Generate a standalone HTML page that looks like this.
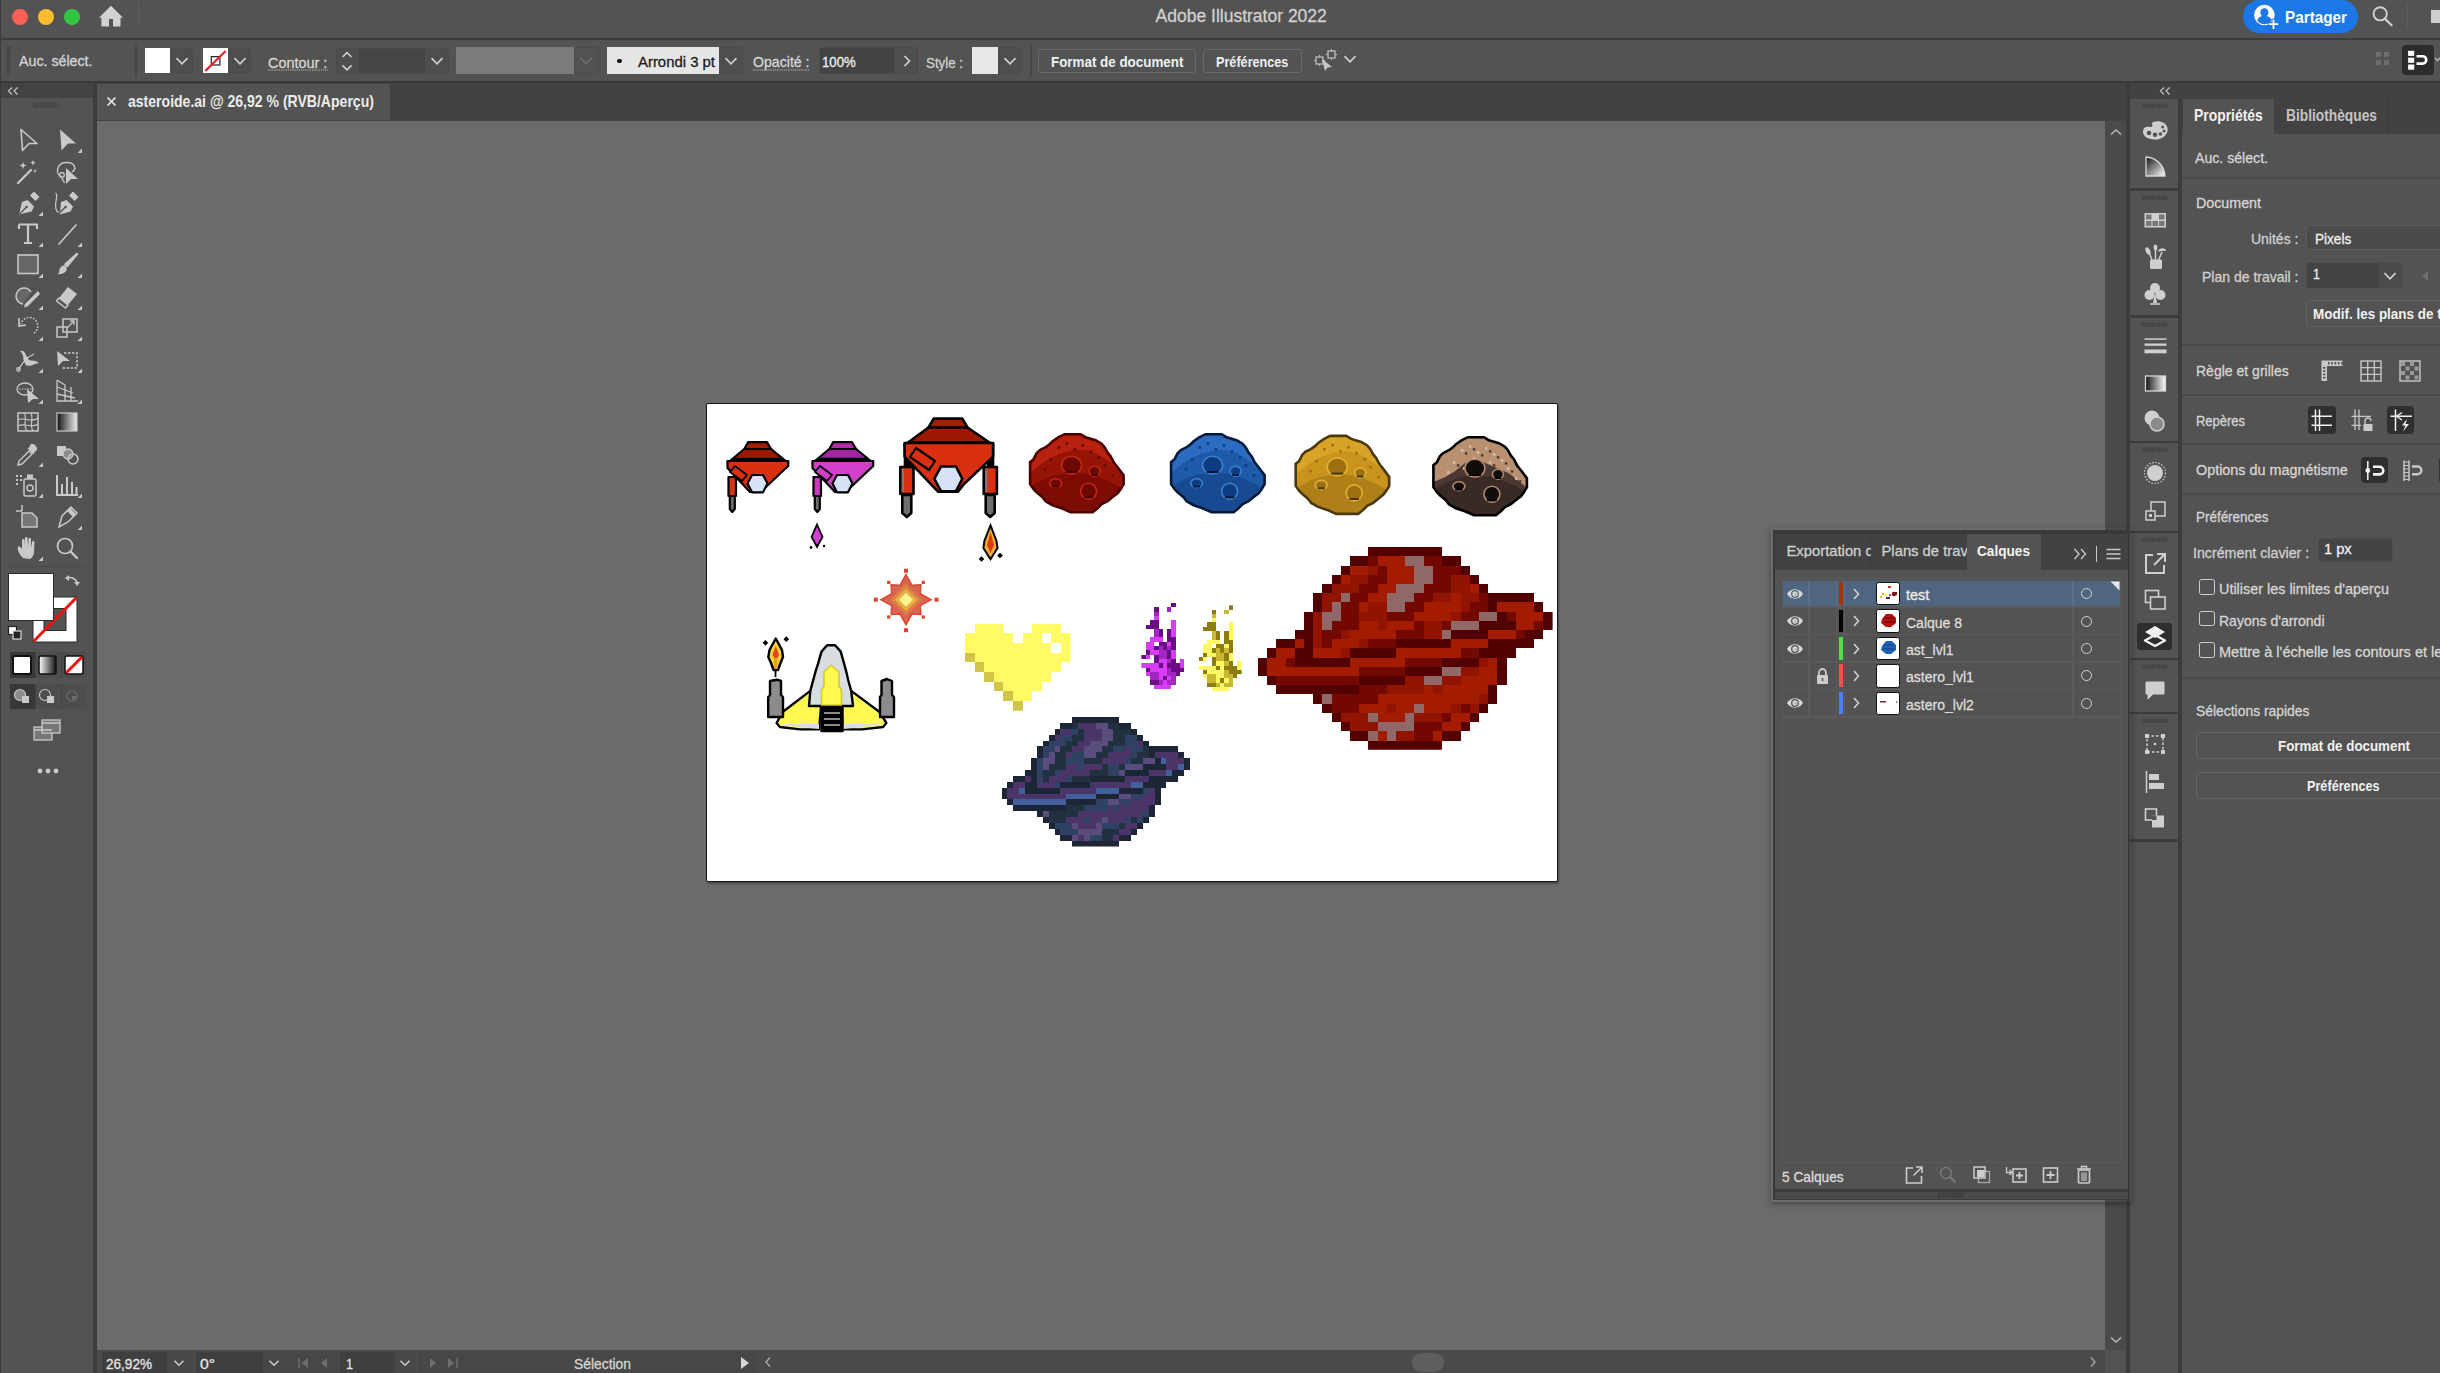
<!DOCTYPE html>
<html><head><meta charset="utf-8">
<style>
*{margin:0;padding:0;box-sizing:border-box}
html,body{width:2440px;height:1373px;overflow:hidden;background:#535353}
body{position:relative;font-family:"Liberation Sans",sans-serif;color:#d8d8d8}
.a{position:absolute;display:block}
.t{position:absolute;white-space:nowrap;line-height:1;transform-origin:0 0}
</style></head><body>
<div class="a" style="left:0px;top:0px;width:2440px;height:38px;background:#535353;"></div>
<div class="a" style="left:0px;top:38px;width:2440px;height:1.5px;background:#3b3b3b;"></div>
<div class="a" style="left:0px;top:39.5px;width:2440px;height:42px;background:#535353;"></div>
<div class="a" style="left:0px;top:81px;width:2440px;height:2px;background:#393939;"></div>
<div class="a" style="left:0px;top:83px;width:2127px;height:38px;background:#424242;"></div>
<div class="a" style="left:0px;top:83px;width:93px;height:15px;background:#434343;"></div>
<div class="a" style="left:0px;top:98px;width:93px;height:1275px;background:#535353;"></div>
<div class="a" style="left:93px;top:83px;width:4px;height:1290px;background:#3c3c3c;"></div>
<div class="a" style="left:97px;top:84px;width:293px;height:36px;background:#535353;"></div>
<div class="a" style="left:97px;top:121px;width:2008px;height:1229px;background:#6b6b6b;"></div>
<div class="a" style="left:2105px;top:121px;width:21px;height:1229px;background:#4a4a4a;"></div>
<div class="a" style="left:97px;top:1350px;width:2008px;height:23px;background:#4a4a4a;"></div>
<div class="a" style="left:2105px;top:1350px;width:21px;height:23px;background:#535353;"></div>
<div class="a" style="left:2126px;top:83px;width:4px;height:1290px;background:#3c3c3c;"></div>
<div class="a" style="left:2130px;top:83px;width:310px;height:16px;background:#424242;"></div>
<div class="a" style="left:2130px;top:99px;width:48px;height:1274px;background:#535353;"></div>
<div class="a" style="left:2178px;top:99px;width:4px;height:1274px;background:#3c3c3c;"></div>
<div class="a" style="left:2182px;top:99px;width:258px;height:1274px;background:#535353;"></div>
<div class="a" style="left:0px;top:0px;width:1px;height:1373px;background:#3a3a3a;"></div>
<div class="a" style="left:11.5px;top:9px;width:16px;height:16px;border-radius:50%;background:#fe5f57"></div>
<div class="a" style="left:37.8px;top:9px;width:16px;height:16px;border-radius:50%;background:#febc2e"></div>
<div class="a" style="left:63.9px;top:9px;width:16px;height:16px;border-radius:50%;background:#30c643"></div>
<svg class="a" style="left:98px;top:4px;" width="26" height="24" viewBox="0 0 26 24"><path d="M13 1.8 L25 13.8 L22.5 13.8 L22.5 22.4 L15 22.4 L15 15 L11 15 L11 22.4 L3.4 22.4 L3.4 13.8 L1 13.8 Z" fill="#d2d2d2"/></svg>
<div class="a" style="left:138px;top:3px;width:1px;height:25px;background:#5f5f5f;"></div>
<div class="t" style="left:1155.6px;top:7.9px;font-size:17.5px;-webkit-text-stroke:0.3px currentColor;color:#d0d0d0;">Adobe Illustrator 2022</div>
<div class="a" style="left:2242.5px;top:0px;width:115.5px;height:32.7px;border-radius:16.4px;background:#1b78e6"></div>
<svg class="a" style="left:2252px;top:3px;" width="30" height="28" viewBox="0 0 30 28"><circle cx="12.4" cy="12" r="10.3" fill="#fff"/><path d="M12.4 5.2c-2.6 0-4 1.9-4 4.2 0 1.6.7 2.9 1.8 3.6-3 .8-4.6 2.6-5 4.6a9 9 0 0 0 14.4 0c-.4-2-2-3.8-5-4.6 1.1-.7 1.8-2 1.8-3.6 0-2.3-1.4-4.2-4-4.2z" fill="#1b78e6"/><path d="M21.5 15.5v11M16 21h11" stroke="#1b78e6" stroke-width="4"/><path d="M21.5 16.5v9.5M16.8 21.2h9.5" stroke="#fff" stroke-width="1.8"/></svg>
<div class="t" style="left:2285.0px;top:8.9px;font-size:16.5px;font-weight:bold;color:#ffffff;transform:scaleX(0.9261);">Partager</div>
<svg class="a" style="left:2370px;top:5px;" width="26" height="24" viewBox="0 0 26 24"><circle cx="10.2" cy="8.8" r="6.6" fill="none" stroke="#d0d0d0" stroke-width="1.9"/><path d="M14.8 13.6 L21.6 20.2" stroke="#d0d0d0" stroke-width="2.2" stroke-linecap="round"/></svg>
<div class="a" style="left:2406.5px;top:2.6px;width:1px;height:25px;background:#5f5f5f;"></div>
<div class="a" style="left:2430.5px;top:9.5px;width:10px;height:13.7px;background:#cfcfcf;"></div>
<svg class="a" style="left:6px;top:47px;" width="5" height="28" viewBox="0 0 5 28"><rect x="0.6" y="0.0" width="3.6" height="1.3" fill="#3d3d3d"/><rect x="0.6" y="2.6" width="3.6" height="1.3" fill="#3d3d3d"/><rect x="0.6" y="5.2" width="3.6" height="1.3" fill="#3d3d3d"/><rect x="0.6" y="7.8" width="3.6" height="1.3" fill="#3d3d3d"/><rect x="0.6" y="10.4" width="3.6" height="1.3" fill="#3d3d3d"/><rect x="0.6" y="13.0" width="3.6" height="1.3" fill="#3d3d3d"/><rect x="0.6" y="15.6" width="3.6" height="1.3" fill="#3d3d3d"/><rect x="0.6" y="18.2" width="3.6" height="1.3" fill="#3d3d3d"/><rect x="0.6" y="20.8" width="3.6" height="1.3" fill="#3d3d3d"/><rect x="0.6" y="23.4" width="3.6" height="1.3" fill="#3d3d3d"/><rect x="0.6" y="26.0" width="3.6" height="1.3" fill="#3d3d3d"/></svg>
<div class="t" style="left:18.9px;top:53.2px;font-size:15.1px;-webkit-text-stroke:0.3px currentColor;color:#d6d6d6;transform:scaleX(0.9421);">Auc. sélect.</div>
<div class="a" style="left:135.2px;top:45px;width:1.5px;height:32px;background:#464646;"></div>
<div class="a" style="left:144.8px;top:48px;width:48.4px;height:25px;background:#4e4e4e;border:1px solid #4a4a4a;border-radius:3px"></div>
<div class="a" style="left:144.8px;top:48px;width:25.2px;height:25px;background:#ffffff;"></div>
<svg class="a" style="left:174px;top:54.7px;" width="16" height="12" viewBox="0 0 16 12"><path d="M2.5 3.2 L8 8.8 L13.5 3.2" fill="none" stroke="#d0d0d0" stroke-width="1.7"/></svg>
<div class="a" style="left:202.7px;top:48px;width:48.1px;height:25px;background:#4e4e4e;border:1px solid #4a4a4a;border-radius:3px"></div>
<div class="a" style="left:202.7px;top:48px;width:25.1px;height:25px;background:#ffffff;"></div>
<svg class="a" style="left:202.7px;top:48px;" width="25" height="25" viewBox="0 0 25 25"><rect x="8.3" y="8.6" width="8.6" height="8.4" fill="none" stroke="#222" stroke-width="1.2"/><path d="M2.3 23 L22.6 3" stroke="#ee1c1c" stroke-width="2.2"/></svg>
<svg class="a" style="left:231.8px;top:54.7px;" width="16" height="12" viewBox="0 0 16 12"><path d="M2.5 3.2 L8 8.8 L13.5 3.2" fill="none" stroke="#d0d0d0" stroke-width="1.7"/></svg>
<div class="t" style="left:267.7px;top:54.5px;font-size:15.1px;-webkit-text-stroke:0.3px currentColor;color:#d6d6d6;transform:scaleX(0.9551);">Contour :</div>
<svg class="a" style="left:267.7px;top:69px;" width="60" height="2" viewBox="0 0 60 2"><path d="M0 1 H60" stroke="#bdbdbd" stroke-width="1" stroke-dasharray="1.2 1"/></svg>
<div class="a" style="left:335.6px;top:48px;width:113.1px;height:25.5px;background:#4e4e4e;border:1px solid #4a4a4a;border-radius:3px"></div>
<div class="a" style="left:359px;top:49px;width:66px;height:23.5px;background:#454545;"></div>
<svg class="a" style="left:340px;top:48px;" width="14" height="26" viewBox="0 0 14 26"><path d="M2.5 9 L7 4.6 L11.5 9 M2.5 17.4 L7 21.8 L11.5 17.4" fill="none" stroke="#d0d0d0" stroke-width="1.6"/></svg>
<svg class="a" style="left:429px;top:54.7px;" width="16" height="12" viewBox="0 0 16 12"><path d="M2.5 3.2 L8 8.8 L13.5 3.2" fill="none" stroke="#d0d0d0" stroke-width="1.7"/></svg>
<div class="a" style="left:456px;top:47.4px;width:118px;height:27px;background:#7b7b7b;"></div>
<div class="a" style="left:574px;top:47.4px;width:24.6px;height:27px;background:#535353;border:1px solid #4a4a4a;border-radius:3px"></div>
<svg class="a" style="left:578px;top:54.7px;" width="16" height="12" viewBox="0 0 16 12"><path d="M2.5 3.2 L8 8.8 L13.5 3.2" fill="none" stroke="#6d6d6d" stroke-width="1.7"/></svg>
<div class="a" style="left:606.5px;top:47.4px;width:136.5px;height:27px;background:#4e4e4e;border:1px solid #4a4a4a;border-radius:3px"></div>
<div class="a" style="left:606.5px;top:47.4px;width:112.5px;height:27px;background:#e6e6e6;"></div>
<div class="a" style="left:617px;top:58.5px;width:4.5px;height:4.5px;border-radius:50%;background:#111"></div>
<div class="t" style="left:638.0px;top:53.5px;font-size:15.1px;-webkit-text-stroke:0.3px currentColor;color:#1b1b1b;transform:scaleX(0.9868);">Arrondi 3 pt</div>
<svg class="a" style="left:723px;top:54.7px;" width="16" height="12" viewBox="0 0 16 12"><path d="M2.5 3.2 L8 8.8 L13.5 3.2" fill="none" stroke="#d0d0d0" stroke-width="1.7"/></svg>
<div class="t" style="left:752.8px;top:53.5px;font-size:15.1px;-webkit-text-stroke:0.3px currentColor;color:#d6d6d6;transform:scaleX(0.9354);">Opacité :</div>
<svg class="a" style="left:752.8px;top:68.5px;" width="57" height="2" viewBox="0 0 57 2"><path d="M0 1 H57" stroke="#bdbdbd" stroke-width="1" stroke-dasharray="1.2 1"/></svg>
<div class="a" style="left:818.7px;top:47.4px;width:99.5px;height:27px;background:#4e4e4e;border:1px solid #4a4a4a;border-radius:3px"></div>
<div class="a" style="left:819.7px;top:48.4px;width:74.7px;height:25px;background:#434343;"></div>
<div class="t" style="left:822.3px;top:53.5px;font-size:15.1px;-webkit-text-stroke:0.3px currentColor;color:#f0f0f0;transform:scaleX(0.8730);">100%</div>
<svg class="a" style="left:900px;top:53px;" width="14" height="16" viewBox="0 0 14 16"><path d="M4.5 3 L9.5 8 L4.5 13" fill="none" stroke="#d0d0d0" stroke-width="1.7"/></svg>
<div class="t" style="left:925.6px;top:54.5px;font-size:15.1px;-webkit-text-stroke:0.3px currentColor;color:#cfcfcf;transform:scaleX(0.8822);">Style :</div>
<div class="a" style="left:972.3px;top:47.4px;width:49.2px;height:27px;background:#4e4e4e;border:1px solid #4a4a4a;border-radius:3px"></div>
<div class="a" style="left:972.3px;top:47.4px;width:25.4px;height:27px;background:#e8e8e8;"></div>
<svg class="a" style="left:1001.6px;top:54.7px;" width="16" height="12" viewBox="0 0 16 12"><path d="M2.5 3.2 L8 8.8 L13.5 3.2" fill="none" stroke="#d0d0d0" stroke-width="1.7"/></svg>
<div class="a" style="left:1030px;top:45px;width:1.5px;height:32px;background:#464646;"></div>
<div class="a" style="left:1038.4px;top:48.6px;width:157.9px;height:24.1px;border:1.2px solid #6a6a6a;border-radius:3px"></div>
<div class="t" style="left:1051.0px;top:54.1px;font-size:15.5px;font-weight:bold;color:#f0f0f0;transform:scaleX(0.8637);">Format de document</div>
<div class="a" style="left:1203px;top:48.6px;width:99px;height:24.1px;border:1.2px solid #6a6a6a;border-radius:3px"></div>
<div class="t" style="left:1216.0px;top:54.1px;font-size:15.5px;font-weight:bold;color:#f0f0f0;transform:scaleX(0.8157);">Préférences</div>
<svg class="a" style="left:1313px;top:48px;" width="26" height="24" viewBox="0 0 26 24"><rect x="3" y="9" width="7" height="7" fill="none" stroke="#bdbdbd" stroke-width="1.3"/><rect x="15" y="3" width="7" height="7" fill="none" stroke="#bdbdbd" stroke-width="1.3"/><path d="M1 12.5h2M10 12.5h2M6.5 7v2M6.5 16v2M13 6.5h2M22 6.5h2M18.5 1v2M18.5 10v2" stroke="#bdbdbd" stroke-width="1"/><path d="M9 11 L19 19 L14.5 19.5 L12 23 Z" fill="#c8c8c8"/></svg>
<svg class="a" style="left:1341.6px;top:53.2px;" width="16" height="12" viewBox="0 0 16 12"><path d="M2.5 3.2 L8 8.8 L13.5 3.2" fill="none" stroke="#d0d0d0" stroke-width="1.7"/></svg>
<svg class="a" style="left:2374px;top:50px;" width="20" height="20" viewBox="0 0 20 20"><rect x="2" y="2" width="5" height="5" fill="#6d6d6d"/><rect x="10" y="2" width="5" height="5" fill="#6d6d6d"/><rect x="2" y="10" width="5" height="5" fill="#6d6d6d"/><rect x="10" y="10" width="5" height="5" fill="#6d6d6d"/></svg>
<div class="a" style="left:2402px;top:45px;width:31.5px;height:30px;border-radius:4px;background:#2c2c2c"></div>
<svg class="a" style="left:2402px;top:45px;" width="32" height="30" viewBox="0 0 32 30"><rect x="6.1" y="5.8" width="6.1" height="5.1" fill="#fff"/><rect x="6.1" y="12.7" width="6.1" height="5.1" fill="#fff"/><rect x="6.1" y="19.5" width="6.1" height="5.2" fill="#fff"/><path d="M14.5 11.2 H20.5 A3.7 3.7 0 0 1 20.5 18.6 H14.5" fill="none" stroke="#fff" stroke-width="2.6"/></svg>
<svg class="a" style="left:2434px;top:54px;" width="6" height="12" viewBox="0 0 6 12"><path d="M1 4 L3.5 6.5 L6 4" fill="none" stroke="#bbb" stroke-width="1.3"/></svg>
<svg class="a" style="left:6px;top:85px;" width="16" height="12" viewBox="0 0 16 12"><path d="M6 2.5 L2.5 6 L6 9.5 M11.5 2.5 L8 6 L11.5 9.5" fill="none" stroke="#bdbdbd" stroke-width="1.4"/></svg>
<svg class="a" style="left:2158px;top:85px;" width="16" height="12" viewBox="0 0 16 12"><path d="M6 2.5 L2.5 6 L6 9.5 M11.5 2.5 L8 6 L11.5 9.5" fill="none" stroke="#bdbdbd" stroke-width="1.4"/></svg>
<svg class="a" style="left:105px;top:95px;" width="13" height="13" viewBox="0 0 13 13"><path d="M2.5 2.5 L10.5 10.5 M10.5 2.5 L2.5 10.5" stroke="#e8e8e8" stroke-width="1.7"/></svg>
<div class="t" style="left:127.9px;top:93.8px;font-size:15.7px;font-weight:bold;color:#ececec;transform:scaleX(0.8948);">asteroide.ai @ 26,92 % (RVB/Aperçu)</div>
<svg class="a" style="left:33px;top:102px;" width="27" height="6" viewBox="0 0 27 6"><rect x="0.0" y="0.5" width="1.3" height="5" fill="#3f3f3f"/><rect x="2.4" y="0.5" width="1.3" height="5" fill="#3f3f3f"/><rect x="4.8" y="0.5" width="1.3" height="5" fill="#3f3f3f"/><rect x="7.2" y="0.5" width="1.3" height="5" fill="#3f3f3f"/><rect x="9.6" y="0.5" width="1.3" height="5" fill="#3f3f3f"/><rect x="12.0" y="0.5" width="1.3" height="5" fill="#3f3f3f"/><rect x="14.4" y="0.5" width="1.3" height="5" fill="#3f3f3f"/><rect x="16.8" y="0.5" width="1.3" height="5" fill="#3f3f3f"/><rect x="19.2" y="0.5" width="1.3" height="5" fill="#3f3f3f"/><rect x="21.6" y="0.5" width="1.3" height="5" fill="#3f3f3f"/><rect x="24.0" y="0.5" width="1.3" height="5" fill="#3f3f3f"/></svg>
<svg class="a" style="left:13.5px;top:126.4px;" width="28" height="28" viewBox="0 0 28 28"><path d="M7 3.5 L23 17.5 L15 17.5 L8.5 24.5 Z" fill="none" stroke="#c9c9c9" stroke-width="1.6" stroke-linejoin="round"/></svg>
<svg class="a" style="left:52.5px;top:126.4px;" width="28" height="28" viewBox="0 0 28 28"><path d="M7 3.5 L23 17.5 L15 17.5 L8.5 24.5 Z" fill="#c9c9c9"/></svg>
<svg class="a" style="left:76.5px;top:148.4px;" width="7" height="7" viewBox="0 0 7 7"><path d="M5 0.5 V5 H0.5 Z" fill="#c9c9c9"/></svg>
<svg class="a" style="left:13.5px;top:158px;" width="28" height="28" viewBox="0 0 28 28"><path d="M4 25 L17 12" stroke="#c9c9c9" stroke-width="2.3" stroke-linecap="round"/><path d="M9 4 l1 2.6 2.6 1 -2.6 1 -1 2.6 -1 -2.6 -2.6 -1 2.6 -1z M19 2 l.8 2 2 .8 -2 .8 -.8 2 -.8 -2 -2 -.8 2 -.8z M21 11 l.6 1.4 1.4.6 -1.4.6 -.6 1.4 -.6 -1.4 -1.4 -.6 1.4 -.6z" fill="#c9c9c9"/></svg>
<svg class="a" style="left:52.5px;top:158px;" width="28" height="28" viewBox="0 0 28 28"><path d="M9 19 C2 17 3 5 13 4.5 C22 4 24 11 19 14" fill="none" stroke="#c9c9c9" stroke-width="1.4"/><circle cx="9" cy="17" r="2.3" fill="none" stroke="#c9c9c9" stroke-width="1.3"/><path d="M9 19.5 C9 23 12 22 11 25" fill="none" stroke="#c9c9c9" stroke-width="1.3"/><path d="M13 10 L25 21 L18 21 L13 26 Z" fill="#c9c9c9"/></svg>
<svg class="a" style="left:13.5px;top:189px;" width="28" height="28" viewBox="0 0 28 28"><path d="M13.5 11 L20 17.5 L17.5 22.5 L5 25.5 L8 13 Z" fill="#c9c9c9"/><path d="M5.5 25 L12 18.5" stroke="#535353" stroke-width="1.2"/><circle cx="12.5" cy="18" r="1.3" fill="#535353"/><path d="M16 6.5 L20 2.5 L25.5 8 L21.5 12 Z" fill="#c9c9c9"/></svg>
<svg class="a" style="left:37.5px;top:211px;" width="7" height="7" viewBox="0 0 7 7"><path d="M5 0.5 V5 H0.5 Z" fill="#c9c9c9"/></svg>
<svg class="a" style="left:52.5px;top:189px;" width="28" height="28" viewBox="0 0 28 28"><path d="M2.5 4 C6 6 1 14 3 20 C4 24 7 24 8 22" fill="none" stroke="#c9c9c9" stroke-width="1.2"/><path d="M13.5 11 L20 17.5 L17.5 22.5 L7 25.5 L8 13 Z" fill="#c9c9c9"/><path d="M5.5 25 L12 18.5" stroke="#535353" stroke-width="1.2"/><circle cx="12.5" cy="18" r="1.3" fill="#535353"/><path d="M16 6.5 L20 2.5 L25.5 8 L21.5 12 Z" fill="#c9c9c9"/></svg>
<svg class="a" style="left:13.5px;top:220px;" width="28" height="28" viewBox="0 0 28 28"><path d="M5 4.5 H23 V9 M5 4.5 V9 M14 4.5 V23 M10 23 H18" fill="none" stroke="#c9c9c9" stroke-width="2.2"/></svg>
<svg class="a" style="left:37.5px;top:242px;" width="7" height="7" viewBox="0 0 7 7"><path d="M5 0.5 V5 H0.5 Z" fill="#c9c9c9"/></svg>
<svg class="a" style="left:52.5px;top:220px;" width="28" height="28" viewBox="0 0 28 28"><path d="M6 24 L23 5" stroke="#c9c9c9" stroke-width="1.7" stroke-linecap="round"/></svg>
<svg class="a" style="left:76.5px;top:242px;" width="7" height="7" viewBox="0 0 7 7"><path d="M5 0.5 V5 H0.5 Z" fill="#c9c9c9"/></svg>
<svg class="a" style="left:13.5px;top:251px;" width="28" height="28" viewBox="0 0 28 28"><rect x="4" y="4" width="20" height="18.5" fill="#686868" stroke="#c9c9c9" stroke-width="1.6"/></svg>
<svg class="a" style="left:37.5px;top:273px;" width="7" height="7" viewBox="0 0 7 7"><path d="M5 0.5 V5 H0.5 Z" fill="#c9c9c9"/></svg>
<svg class="a" style="left:52.5px;top:251px;" width="28" height="28" viewBox="0 0 28 28"><path d="M24 3 L14 15 L12.5 13.5 Z" fill="#c9c9c9" stroke="#c9c9c9" stroke-width="2.5" stroke-linejoin="round"/><path d="M11.5 14.5 C8 14 6 18 6 22 L4.5 23 C9 24 15 21 13.5 16.5 Z" fill="#c9c9c9"/></svg>
<svg class="a" style="left:76.5px;top:273px;" width="7" height="7" viewBox="0 0 7 7"><path d="M5 0.5 V5 H0.5 Z" fill="#c9c9c9"/></svg>
<svg class="a" style="left:13.5px;top:282.5px;" width="28" height="28" viewBox="0 0 28 28"><path d="M9 21 A8 8 0 1 1 17 9" fill="#686868" stroke="#c9c9c9" stroke-width="1.5"/><path d="M24 8 L11 21 L10 24.5 L13.5 23.5 L26 11 Z" fill="#c9c9c9"/></svg>
<svg class="a" style="left:37.5px;top:304.5px;" width="7" height="7" viewBox="0 0 7 7"><path d="M5 0.5 V5 H0.5 Z" fill="#c9c9c9"/></svg>
<svg class="a" style="left:52.5px;top:282.5px;" width="28" height="28" viewBox="0 0 28 28"><path d="M15 4 L24 11 L15 22 L6 15 Z" fill="#c9c9c9"/><path d="M6 15 L15 22 L12.5 25 L3.5 18 Z" fill="none" stroke="#c9c9c9" stroke-width="1.4"/></svg>
<svg class="a" style="left:76.5px;top:304.5px;" width="7" height="7" viewBox="0 0 7 7"><path d="M5 0.5 V5 H0.5 Z" fill="#c9c9c9"/></svg>
<svg class="a" style="left:13.5px;top:314px;" width="28" height="28" viewBox="0 0 28 28"><path d="M20 19 A8.5 8.5 0 1 0 7 10" fill="none" stroke="#c9c9c9" stroke-width="1.6" stroke-dasharray="1.6 1.6"/><path d="M5 4 L5 12 L12 11" fill="none" stroke="#c9c9c9" stroke-width="1.6"/></svg>
<svg class="a" style="left:37.5px;top:336px;" width="7" height="7" viewBox="0 0 7 7"><path d="M5 0.5 V5 H0.5 Z" fill="#c9c9c9"/></svg>
<svg class="a" style="left:52.5px;top:314px;" width="28" height="28" viewBox="0 0 28 28"><rect x="4" y="13" width="10" height="10" fill="none" stroke="#c9c9c9" stroke-width="1.5"/><rect x="10" y="5" width="14" height="13" fill="none" stroke="#c9c9c9" stroke-width="1.5"/><path d="M14 14 L21 7 M17 7 H21 V11" fill="none" stroke="#c9c9c9" stroke-width="1.3"/></svg>
<svg class="a" style="left:76.5px;top:336px;" width="7" height="7" viewBox="0 0 7 7"><path d="M5 0.5 V5 H0.5 Z" fill="#c9c9c9"/></svg>
<svg class="a" style="left:13.5px;top:345.5px;" width="28" height="28" viewBox="0 0 28 28"><path d="M4 24 L12 13 L20 8" stroke="#c9c9c9" stroke-width="1.3"/><circle cx="4.5" cy="23.5" r="1.8" fill="none" stroke="#c9c9c9" stroke-width="1.2"/><circle cx="12" cy="13" r="2" fill="none" stroke="#c9c9c9" stroke-width="1.2"/><path d="M6 5 C10 4 12 8 13 12 C16 17 22 12 25 18 C21 16 17 22 12 19 C9 17 11 9 6 5Z" fill="#c9c9c9"/></svg>
<svg class="a" style="left:37.5px;top:367.5px;" width="7" height="7" viewBox="0 0 7 7"><path d="M5 0.5 V5 H0.5 Z" fill="#c9c9c9"/></svg>
<svg class="a" style="left:52.5px;top:345.5px;" width="28" height="28" viewBox="0 0 28 28"><path d="M4 5 L17 15 L10 15 L5 20 Z" fill="#c9c9c9"/><path d="M11 7 H24 V22 H9" fill="none" stroke="#c9c9c9" stroke-width="1.4" stroke-dasharray="2.5 1.5"/></svg>
<svg class="a" style="left:76.5px;top:367.5px;" width="7" height="7" viewBox="0 0 7 7"><path d="M5 0.5 V5 H0.5 Z" fill="#c9c9c9"/></svg>
<svg class="a" style="left:13.5px;top:377px;" width="28" height="28" viewBox="0 0 28 28"><ellipse cx="11" cy="12" rx="8" ry="6" fill="none" stroke="#c9c9c9" stroke-width="1.4"/><path d="M5 12 H19" stroke="#c9c9c9" stroke-width="1.2" stroke-dasharray="1.5 1.3"/><path d="M13 12 L25 22 L19 22 L14 26 Z" fill="#c9c9c9"/></svg>
<svg class="a" style="left:37.5px;top:399px;" width="7" height="7" viewBox="0 0 7 7"><path d="M5 0.5 V5 H0.5 Z" fill="#c9c9c9"/></svg>
<svg class="a" style="left:52.5px;top:377px;" width="28" height="28" viewBox="0 0 28 28"><path d="M4 3 V24 H25 M4 3 L12 8 V24 M4 10 L20 16 M4 17 L22 21 M18 10 V24" fill="none" stroke="#c9c9c9" stroke-width="1.3"/></svg>
<svg class="a" style="left:76.5px;top:399px;" width="7" height="7" viewBox="0 0 7 7"><path d="M5 0.5 V5 H0.5 Z" fill="#c9c9c9"/></svg>
<svg class="a" style="left:13.5px;top:408px;" width="28" height="28" viewBox="0 0 28 28"><rect x="4" y="5" width="20" height="18" fill="none" stroke="#c9c9c9" stroke-width="1.5"/><path d="M4 12 C10 8 17 16 24 10 M4 18 C11 14 17 21 24 16 M10 5 C14 10 8 16 13 23 M17 5 C20 11 15 17 19 23" fill="none" stroke="#c9c9c9" stroke-width="1.1"/></svg>
<svg class="a" style="left:52.5px;top:408px;" width="28" height="28" viewBox="0 0 28 28"><defs><linearGradient id="g1" x1="0" x2="1"><stop offset="0" stop-color="#111"/><stop offset="1" stop-color="#eee"/></linearGradient></defs><rect x="4" y="5" width="20" height="18" fill="url(#g1)" stroke="#c9c9c9" stroke-width="1.2"/></svg>
<svg class="a" style="left:13.5px;top:439.5px;" width="28" height="28" viewBox="0 0 28 28"><path d="M4 25 L5 21 L15 11 L18 14 L8 24 Z" fill="none" stroke="#c9c9c9" stroke-width="1.4"/><path d="M14 8 L20 14 M17 5 C19 3 24 8 22 10 L19 13 L15 9 Z" fill="#c9c9c9" stroke="#c9c9c9" stroke-width="1.2"/></svg>
<svg class="a" style="left:37.5px;top:461.5px;" width="7" height="7" viewBox="0 0 7 7"><path d="M5 0.5 V5 H0.5 Z" fill="#c9c9c9"/></svg>
<svg class="a" style="left:52.5px;top:439.5px;" width="28" height="28" viewBox="0 0 28 28"><rect x="4" y="6" width="9" height="10" fill="#c9c9c9"/><circle cx="15" cy="14" r="5" fill="#8a8a8a" stroke="#c9c9c9" stroke-width="1.3"/><circle cx="20" cy="19" r="5" fill="none" stroke="#c9c9c9" stroke-width="1.5"/></svg>
<svg class="a" style="left:13.5px;top:471px;" width="28" height="28" viewBox="0 0 28 28"><path d="M2 4h2v2H2zM6 4h2v2H6zM2 8h2v2H2zM6 8h2v2H6zM2 12h2v2H2z" fill="#c9c9c9"/><rect x="10" y="8" width="12" height="17" rx="1.5" fill="none" stroke="#c9c9c9" stroke-width="1.5"/><rect x="13" y="3.5" width="6" height="4.5" fill="#c9c9c9"/><circle cx="16" cy="17" r="3" fill="none" stroke="#c9c9c9" stroke-width="1.4"/></svg>
<svg class="a" style="left:37.5px;top:493px;" width="7" height="7" viewBox="0 0 7 7"><path d="M5 0.5 V5 H0.5 Z" fill="#c9c9c9"/></svg>
<svg class="a" style="left:52.5px;top:471px;" width="28" height="28" viewBox="0 0 28 28"><path d="M4 4 V24 H25 M9 24 V13 M14 24 V6 M19 24 V11 M23.5 24 V16" fill="none" stroke="#c9c9c9" stroke-width="2"/></svg>
<svg class="a" style="left:76.5px;top:493px;" width="7" height="7" viewBox="0 0 7 7"><path d="M5 0.5 V5 H0.5 Z" fill="#c9c9c9"/></svg>
<svg class="a" style="left:13.5px;top:502.5px;" width="28" height="28" viewBox="0 0 28 28"><path d="M8 2 V8 M2 8 H8" stroke="#c9c9c9" stroke-width="1.5"/><path d="M8 10 H18 L23 15 V24 H8 Z" fill="#777" stroke="#c9c9c9" stroke-width="1.5"/></svg>
<svg class="a" style="left:52.5px;top:502.5px;" width="28" height="28" viewBox="0 0 28 28"><path d="M6 24 L9 13 L18 4 L24 10 L15 19 Z" fill="none" stroke="#c9c9c9" stroke-width="1.5"/><path d="M17 5 L23 11 L20 14 L14 8 Z" fill="#c9c9c9"/></svg>
<svg class="a" style="left:76.5px;top:524.5px;" width="7" height="7" viewBox="0 0 7 7"><path d="M5 0.5 V5 H0.5 Z" fill="#c9c9c9"/></svg>
<svg class="a" style="left:13.5px;top:534px;" width="28" height="28" viewBox="0 0 28 28"><path d="M9 24 C5 20 3 15 4 13 C5 12 7 13 8 15 L8 6 C8 4.5 10.5 4.5 10.5 6 L10.5 13 L11 4 C11 2.5 13.5 2.5 13.5 4 L14 13 L14.5 5 C14.5 3.5 17 3.5 17 5 L17 14 L18 8 C18 6.5 20.5 6.5 20.5 8 L20 18 C20 21 18 24 16 25 Z" fill="#c9c9c9"/></svg>
<svg class="a" style="left:37.5px;top:556px;" width="7" height="7" viewBox="0 0 7 7"><path d="M5 0.5 V5 H0.5 Z" fill="#c9c9c9"/></svg>
<svg class="a" style="left:52.5px;top:534px;" width="28" height="28" viewBox="0 0 28 28"><circle cx="12" cy="12" r="7.5" fill="none" stroke="#c9c9c9" stroke-width="1.7"/><path d="M17.5 17.5 L24 24" stroke="#c9c9c9" stroke-width="2.4" stroke-linecap="round"/></svg>
<div class="a" style="left:8px;top:566px;width:77px;height:1px;background:#4a4a4a;"></div>
<div class="a" style="left:8px;top:573px;width:45px;height:47px;background:#ffffff;"></div>
<div class="a" style="left:8px;top:573px;width:45px;height:47px;border:1px solid #2b2b2b"></div>
<svg class="a" style="left:32px;top:596px;" width="46" height="47" viewBox="0 0 46 47"><rect x="1" y="1" width="44" height="45" fill="#fff" stroke="#2b2b2b" stroke-width="1"/><rect x="12" y="12.5" width="22" height="22" fill="#535353" stroke="#2b2b2b" stroke-width="1"/><path d="M1.5 45.5 L44.5 1.5" stroke="#ee1111" stroke-width="3"/></svg>
<div class="a" style="left:8px;top:573px;width:45px;height:47px;background:#ffffff;"></div>
<div class="a" style="left:7.5px;top:572.5px;width:46px;height:48px;border:1.2px solid #2b2b2b"></div>
<svg class="a" style="left:64px;top:573px;" width="18" height="16" viewBox="0 0 18 16"><path d="M3 5 A8 8 0 0 1 13 9" fill="none" stroke="#c9c9c9" stroke-width="1.6"/><path d="M1 5 L5 2 L5 8 Z M13 13 L10 9 L16 9 Z" fill="#c9c9c9"/></svg>
<svg class="a" style="left:7px;top:625px;" width="18" height="16" viewBox="0 0 18 16"><rect x="1.5" y="1.5" width="8" height="8" fill="#fff" stroke="#222" stroke-width="1.2"/><rect x="6" y="6" width="8" height="8" fill="#222" stroke="#ddd" stroke-width="1.2"/></svg>
<div class="a" style="left:10px;top:652px;width:77px;height:26px;background:#4d4d4d;"></div>
<div class="a" style="left:10px;top:652px;width:25px;height:26px;background:#383838;"></div>
<svg class="a" style="left:10px;top:652px;" width="77" height="26" viewBox="0 0 77 26"><rect x="3" y="4" width="18" height="18" rx="2" fill="#fff" stroke="#111" stroke-width="2"/><defs><linearGradient id="g2" x1="0" x2="1"><stop offset="0" stop-color="#fff"/><stop offset="1" stop-color="#111"/></linearGradient></defs><rect x="29" y="4" width="17" height="18" rx="2" fill="url(#g2)" stroke="#111" stroke-width="1.5"/><rect x="55" y="4" width="18" height="18" rx="2" fill="#fff" stroke="#111" stroke-width="1.5"/><path d="M56 21 L72 5" stroke="#ee1111" stroke-width="3"/></svg>
<div class="a" style="left:34.5px;top:652px;width:1px;height:26px;background:#444;"></div>
<div class="a" style="left:60.5px;top:652px;width:1px;height:26px;background:#444;"></div>
<div class="a" style="left:10px;top:684px;width:77px;height:25px;background:#4d4d4d;"></div>
<div class="a" style="left:10px;top:684px;width:25px;height:25px;background:#383838;"></div>
<svg class="a" style="left:10px;top:684px;" width="77" height="25" viewBox="0 0 77 25"><circle cx="10" cy="11" r="5.5" fill="#8c8c8c" stroke="#c9c9c9" stroke-width="1.2"/><rect x="12" y="12" width="7" height="7" fill="#c9c9c9"/><circle cx="35" cy="11" r="5.5" fill="none" stroke="#c9c9c9" stroke-width="1.2"/><rect x="37" y="12" width="7" height="7" fill="#c9c9c9"/><circle cx="62" cy="12" r="5" fill="none" stroke="#6b6b6b" stroke-width="1.2"/><path d="M62 12 h4 a4 4 0 0 1 -4 4z" fill="#6b6b6b"/></svg>
<div class="a" style="left:34.5px;top:684px;width:1px;height:25px;background:#444;"></div>
<div class="a" style="left:60.5px;top:684px;width:1px;height:25px;background:#444;"></div>
<svg class="a" style="left:32px;top:717px;" width="30" height="26" viewBox="0 0 30 26"><rect x="2" y="10" width="18" height="13" fill="#777" stroke="#c9c9c9" stroke-width="1.3"/><rect x="10" y="3" width="18" height="13" fill="#777" stroke="#c9c9c9" stroke-width="1.3"/><path d="M2 13 H20 M10 6 H28" stroke="#c9c9c9" stroke-width="1.3"/></svg>
<svg class="a" style="left:36px;top:765px;" width="24" height="12" viewBox="0 0 24 12"><circle cx="4" cy="6" r="2.4" fill="#c9c9c9"/><circle cx="12" cy="6" r="2.4" fill="#c9c9c9"/><circle cx="20" cy="6" r="2.4" fill="#c9c9c9"/></svg>
<div class="a" style="left:101.8px;top:1352px;width:65px;height:21px;background:#3f3f3f;"></div>
<div class="a" style="left:166.7px;top:1352px;width:24px;height:21px;background:#474747;"></div>
<div class="t" style="left:106.0px;top:1357.2px;font-size:14.5px;-webkit-text-stroke:0.3px currentColor;color:#e4e4e4;transform:scaleX(0.9354);">26,92%</div>
<svg class="a" style="left:170.5px;top:1357px;" width="16" height="12" viewBox="0 0 16 12"><path d="M3.5 3.8 L8 8.2 L12.5 3.8" fill="none" stroke="#cfcfcf" stroke-width="1.5"/></svg>
<div class="a" style="left:196px;top:1352px;width:67px;height:21px;background:#3f3f3f;"></div>
<div class="a" style="left:263px;top:1352px;width:22.6px;height:21px;background:#474747;"></div>
<div class="t" style="left:200.0px;top:1357.2px;font-size:14.5px;-webkit-text-stroke:0.3px currentColor;color:#e4e4e4;transform:scaleX(1.0820);">0°</div>
<svg class="a" style="left:266px;top:1357px;" width="16" height="12" viewBox="0 0 16 12"><path d="M3.5 3.8 L8 8.2 L12.5 3.8" fill="none" stroke="#cfcfcf" stroke-width="1.5"/></svg>
<div class="a" style="left:287px;top:1352px;width:52px;height:21px;background:#474747;"></div>
<svg class="a" style="left:294px;top:1354px;" width="40" height="18" viewBox="0 0 40 18"><path d="M5 4 V14" stroke="#6e6e6e" stroke-width="1.5"/><path d="M14 4 L7.5 9 L14 14 Z M33 4 L27 9 L33 14 Z" fill="#6e6e6e"/></svg>
<div class="a" style="left:340.4px;top:1352px;width:53.6px;height:21px;background:#3f3f3f;"></div>
<div class="a" style="left:394px;top:1352px;width:22px;height:21px;background:#474747;"></div>
<div class="t" style="left:346.0px;top:1357.2px;font-size:14.5px;-webkit-text-stroke:0.3px currentColor;color:#e4e4e4;transform:scaleX(0.8680);">1</div>
<svg class="a" style="left:396.5px;top:1357px;" width="16" height="12" viewBox="0 0 16 12"><path d="M3.5 3.8 L8 8.2 L12.5 3.8" fill="none" stroke="#cfcfcf" stroke-width="1.5"/></svg>
<div class="a" style="left:418px;top:1352px;width:54px;height:21px;background:#474747;"></div>
<svg class="a" style="left:424px;top:1354px;" width="40" height="18" viewBox="0 0 40 18"><path d="M6 4 L12 9 L6 14 Z M24 4 L30 9 L24 14 Z" fill="#6e6e6e"/><path d="M33 4 V14" stroke="#6e6e6e" stroke-width="1.5"/></svg>
<div class="a" style="left:473px;top:1352px;width:260.5px;height:21px;background:#474747;"></div>
<div class="t" style="left:574.0px;top:1357.2px;font-size:14.5px;-webkit-text-stroke:0.3px currentColor;color:#d4d4d4;transform:scaleX(0.9556);">Sélection</div>
<div class="a" style="left:734px;top:1352px;width:22px;height:21px;background:#474747;"></div>
<svg class="a" style="left:738px;top:1355px;" width="14" height="16" viewBox="0 0 14 16"><path d="M3 2 L11 8 L3 14 Z" fill="#d8d8d8"/></svg>
<svg class="a" style="left:762px;top:1355px;" width="12" height="14" viewBox="0 0 12 14"><path d="M8 2.5 L4 7 L8 11.5" fill="none" stroke="#a8a8a8" stroke-width="1.4"/></svg>
<div class="a" style="left:1411.5px;top:1353px;width:32px;height:19px;border-radius:9.5px;background:#5e5e5e"></div>
<svg class="a" style="left:2087px;top:1355px;" width="12" height="14" viewBox="0 0 12 14"><path d="M4 2.5 L8 7 L4 11.5" fill="none" stroke="#a8a8a8" stroke-width="1.4"/></svg>
<svg class="a" style="left:2108px;top:126px;" width="16" height="12" viewBox="0 0 16 12"><path d="M3 8.5 L8 4 L13 8.5" fill="none" stroke="#bcbcbc" stroke-width="1.4"/></svg>
<svg class="a" style="left:2108px;top:1334px;" width="16" height="12" viewBox="0 0 16 12"><path d="M3 3.5 L8 8 L13 3.5" fill="none" stroke="#bcbcbc" stroke-width="1.4"/></svg>
<div class="a" style="left:2130px;top:188px;width:48px;height:2.5px;background:#3c3c3c;"></div>
<svg class="a" style="left:2142px;top:103px;" width="26" height="6" viewBox="0 0 26 6"><rect x="0.0" y="0.5" width="1.3" height="4.5" fill="#3f3f3f"/><rect x="2.4" y="0.5" width="1.3" height="4.5" fill="#3f3f3f"/><rect x="4.8" y="0.5" width="1.3" height="4.5" fill="#3f3f3f"/><rect x="7.2" y="0.5" width="1.3" height="4.5" fill="#3f3f3f"/><rect x="9.6" y="0.5" width="1.3" height="4.5" fill="#3f3f3f"/><rect x="12.0" y="0.5" width="1.3" height="4.5" fill="#3f3f3f"/><rect x="14.4" y="0.5" width="1.3" height="4.5" fill="#3f3f3f"/><rect x="16.8" y="0.5" width="1.3" height="4.5" fill="#3f3f3f"/><rect x="19.2" y="0.5" width="1.3" height="4.5" fill="#3f3f3f"/><rect x="21.6" y="0.5" width="1.3" height="4.5" fill="#3f3f3f"/><rect x="24.0" y="0.5" width="1.3" height="4.5" fill="#3f3f3f"/></svg>
<div class="a" style="left:2130px;top:315px;width:48px;height:2.5px;background:#3c3c3c;"></div>
<svg class="a" style="left:2142px;top:194.5px;" width="26" height="6" viewBox="0 0 26 6"><rect x="0.0" y="0.5" width="1.3" height="4.5" fill="#3f3f3f"/><rect x="2.4" y="0.5" width="1.3" height="4.5" fill="#3f3f3f"/><rect x="4.8" y="0.5" width="1.3" height="4.5" fill="#3f3f3f"/><rect x="7.2" y="0.5" width="1.3" height="4.5" fill="#3f3f3f"/><rect x="9.6" y="0.5" width="1.3" height="4.5" fill="#3f3f3f"/><rect x="12.0" y="0.5" width="1.3" height="4.5" fill="#3f3f3f"/><rect x="14.4" y="0.5" width="1.3" height="4.5" fill="#3f3f3f"/><rect x="16.8" y="0.5" width="1.3" height="4.5" fill="#3f3f3f"/><rect x="19.2" y="0.5" width="1.3" height="4.5" fill="#3f3f3f"/><rect x="21.6" y="0.5" width="1.3" height="4.5" fill="#3f3f3f"/><rect x="24.0" y="0.5" width="1.3" height="4.5" fill="#3f3f3f"/></svg>
<div class="a" style="left:2130px;top:440.5px;width:48px;height:2.5px;background:#3c3c3c;"></div>
<svg class="a" style="left:2142px;top:321.5px;" width="26" height="6" viewBox="0 0 26 6"><rect x="0.0" y="0.5" width="1.3" height="4.5" fill="#3f3f3f"/><rect x="2.4" y="0.5" width="1.3" height="4.5" fill="#3f3f3f"/><rect x="4.8" y="0.5" width="1.3" height="4.5" fill="#3f3f3f"/><rect x="7.2" y="0.5" width="1.3" height="4.5" fill="#3f3f3f"/><rect x="9.6" y="0.5" width="1.3" height="4.5" fill="#3f3f3f"/><rect x="12.0" y="0.5" width="1.3" height="4.5" fill="#3f3f3f"/><rect x="14.4" y="0.5" width="1.3" height="4.5" fill="#3f3f3f"/><rect x="16.8" y="0.5" width="1.3" height="4.5" fill="#3f3f3f"/><rect x="19.2" y="0.5" width="1.3" height="4.5" fill="#3f3f3f"/><rect x="21.6" y="0.5" width="1.3" height="4.5" fill="#3f3f3f"/><rect x="24.0" y="0.5" width="1.3" height="4.5" fill="#3f3f3f"/></svg>
<div class="a" style="left:2130px;top:530.5px;width:48px;height:2.5px;background:#3c3c3c;"></div>
<svg class="a" style="left:2142px;top:447px;" width="26" height="6" viewBox="0 0 26 6"><rect x="0.0" y="0.5" width="1.3" height="4.5" fill="#3f3f3f"/><rect x="2.4" y="0.5" width="1.3" height="4.5" fill="#3f3f3f"/><rect x="4.8" y="0.5" width="1.3" height="4.5" fill="#3f3f3f"/><rect x="7.2" y="0.5" width="1.3" height="4.5" fill="#3f3f3f"/><rect x="9.6" y="0.5" width="1.3" height="4.5" fill="#3f3f3f"/><rect x="12.0" y="0.5" width="1.3" height="4.5" fill="#3f3f3f"/><rect x="14.4" y="0.5" width="1.3" height="4.5" fill="#3f3f3f"/><rect x="16.8" y="0.5" width="1.3" height="4.5" fill="#3f3f3f"/><rect x="19.2" y="0.5" width="1.3" height="4.5" fill="#3f3f3f"/><rect x="21.6" y="0.5" width="1.3" height="4.5" fill="#3f3f3f"/><rect x="24.0" y="0.5" width="1.3" height="4.5" fill="#3f3f3f"/></svg>
<div class="a" style="left:2130px;top:657.5px;width:48px;height:2.5px;background:#3c3c3c;"></div>
<svg class="a" style="left:2142px;top:537px;" width="26" height="6" viewBox="0 0 26 6"><rect x="0.0" y="0.5" width="1.3" height="4.5" fill="#3f3f3f"/><rect x="2.4" y="0.5" width="1.3" height="4.5" fill="#3f3f3f"/><rect x="4.8" y="0.5" width="1.3" height="4.5" fill="#3f3f3f"/><rect x="7.2" y="0.5" width="1.3" height="4.5" fill="#3f3f3f"/><rect x="9.6" y="0.5" width="1.3" height="4.5" fill="#3f3f3f"/><rect x="12.0" y="0.5" width="1.3" height="4.5" fill="#3f3f3f"/><rect x="14.4" y="0.5" width="1.3" height="4.5" fill="#3f3f3f"/><rect x="16.8" y="0.5" width="1.3" height="4.5" fill="#3f3f3f"/><rect x="19.2" y="0.5" width="1.3" height="4.5" fill="#3f3f3f"/><rect x="21.6" y="0.5" width="1.3" height="4.5" fill="#3f3f3f"/><rect x="24.0" y="0.5" width="1.3" height="4.5" fill="#3f3f3f"/></svg>
<div class="a" style="left:2130px;top:711.5px;width:48px;height:2.5px;background:#3c3c3c;"></div>
<svg class="a" style="left:2142px;top:664px;" width="26" height="6" viewBox="0 0 26 6"><rect x="0.0" y="0.5" width="1.3" height="4.5" fill="#3f3f3f"/><rect x="2.4" y="0.5" width="1.3" height="4.5" fill="#3f3f3f"/><rect x="4.8" y="0.5" width="1.3" height="4.5" fill="#3f3f3f"/><rect x="7.2" y="0.5" width="1.3" height="4.5" fill="#3f3f3f"/><rect x="9.6" y="0.5" width="1.3" height="4.5" fill="#3f3f3f"/><rect x="12.0" y="0.5" width="1.3" height="4.5" fill="#3f3f3f"/><rect x="14.4" y="0.5" width="1.3" height="4.5" fill="#3f3f3f"/><rect x="16.8" y="0.5" width="1.3" height="4.5" fill="#3f3f3f"/><rect x="19.2" y="0.5" width="1.3" height="4.5" fill="#3f3f3f"/><rect x="21.6" y="0.5" width="1.3" height="4.5" fill="#3f3f3f"/><rect x="24.0" y="0.5" width="1.3" height="4.5" fill="#3f3f3f"/></svg>
<div class="a" style="left:2130px;top:839px;width:48px;height:2.5px;background:#3c3c3c;"></div>
<svg class="a" style="left:2142px;top:718px;" width="26" height="6" viewBox="0 0 26 6"><rect x="0.0" y="0.5" width="1.3" height="4.5" fill="#3f3f3f"/><rect x="2.4" y="0.5" width="1.3" height="4.5" fill="#3f3f3f"/><rect x="4.8" y="0.5" width="1.3" height="4.5" fill="#3f3f3f"/><rect x="7.2" y="0.5" width="1.3" height="4.5" fill="#3f3f3f"/><rect x="9.6" y="0.5" width="1.3" height="4.5" fill="#3f3f3f"/><rect x="12.0" y="0.5" width="1.3" height="4.5" fill="#3f3f3f"/><rect x="14.4" y="0.5" width="1.3" height="4.5" fill="#3f3f3f"/><rect x="16.8" y="0.5" width="1.3" height="4.5" fill="#3f3f3f"/><rect x="19.2" y="0.5" width="1.3" height="4.5" fill="#3f3f3f"/><rect x="21.6" y="0.5" width="1.3" height="4.5" fill="#3f3f3f"/><rect x="24.0" y="0.5" width="1.3" height="4.5" fill="#3f3f3f"/></svg>
<div class="a" style="left:2130px;top:841.5px;width:48px;height:532px;background:#535353;"></div>
<svg class="a" style="left:2142px;top:115.5px;" width="26" height="26" viewBox="0 0 26 26"><path d="M12 5.8 C17 4.3 24 6 25.5 12 C26.5 18 21 23.5 13 23.5 C6 23.5 1 20.5 1 15.5 C1 11.5 5 10.3 8 11 C10 11.5 10.8 9.5 10.2 8.3 C9.6 7 10.5 6.2 12 5.8 Z" fill="#cfcfcf"/><circle cx="7" cy="17" r="2.3" fill="#535353"/><circle cx="13" cy="18.8" r="2.2" fill="#535353"/><circle cx="18.4" cy="18" r="1.8" fill="#535353"/><circle cx="22" cy="15" r="1.6" fill="#535353"/><circle cx="20.6" cy="11" r="1.5" fill="#535353"/></svg>
<svg class="a" style="left:2142px;top:153.6px;" width="26" height="26" viewBox="0 0 26 26"><defs><linearGradient id="g3" x1="0" y1="0" x2="1" y2="1"><stop offset="0" stop-color="#111"/><stop offset="1" stop-color="#fff"/></linearGradient></defs><path d="M4 3 A20 20 0 0 1 23 22 H4 Z" fill="url(#g3)" stroke="#d6d6d6" stroke-width="1.3"/></svg>
<svg class="a" style="left:2142px;top:207.4px;" width="26" height="26" viewBox="0 0 26 26"><rect x="2.5" y="6" width="21.5" height="14.5" fill="#cfcfcf"/><rect x="4" y="7.5" width="5.5" height="5" fill="#777"/><rect x="17" y="7.5" width="5.5" height="5" fill="#777"/><rect x="4" y="14" width="5.5" height="5" fill="#777"/><rect x="10.5" y="14" width="5.5" height="5" fill="#777"/><rect x="17" y="14" width="5.5" height="5" fill="#777"/></svg>
<svg class="a" style="left:2142px;top:243px;" width="26" height="26" viewBox="0 0 26 26"><rect x="8" y="16.5" width="12" height="9.5" rx="1" fill="#cfcfcf"/><path d="M10 17 L7 9 M13.5 17 L13.5 6 M16.5 17 L20 9" stroke="#cfcfcf" stroke-width="1.5"/><ellipse cx="6" cy="8" rx="2.2" ry="4" transform="rotate(-25 6 8)" fill="#cfcfcf"/><ellipse cx="13.5" cy="4.5" rx="1.8" ry="3" fill="#cfcfcf"/><path d="M16 8.5 C17 5 22 4 24.5 7.5 Z" fill="#cfcfcf"/></svg>
<svg class="a" style="left:2142px;top:279.6px;" width="26" height="26" viewBox="0 0 26 26"><circle cx="13" cy="8" r="5" fill="#cfcfcf"/><circle cx="7.5" cy="15" r="5" fill="#cfcfcf"/><circle cx="18.5" cy="15" r="5" fill="#cfcfcf"/><path d="M13 12 L11 23 H15 Z" fill="#cfcfcf"/><path d="M8 24 H18" stroke="#cfcfcf" stroke-width="1.5"/></svg>
<svg class="a" style="left:2142px;top:333.4px;" width="26" height="26" viewBox="0 0 26 26"><rect x="2.5" y="5.3" width="22" height="1.5" fill="#cfcfcf"/><rect x="2.5" y="10.5" width="22" height="2.3" fill="#cfcfcf"/><rect x="2.5" y="16.5" width="22" height="3.8" fill="#cfcfcf"/></svg>
<svg class="a" style="left:2142px;top:370px;" width="26" height="26" viewBox="0 0 26 26"><defs><linearGradient id="g4" x1="0" x2="1"><stop offset="0" stop-color="#111"/><stop offset="1" stop-color="#fff"/></linearGradient></defs><rect x="3.5" y="6" width="20" height="15" fill="url(#g4)" stroke="#d6d6d6" stroke-width="1.3"/></svg>
<svg class="a" style="left:2142px;top:408px;" width="26" height="26" viewBox="0 0 26 26"><circle cx="10" cy="10" r="7.5" fill="#cfcfcf"/><circle cx="15" cy="16" r="7" fill="#8a8a8a" stroke="#cfcfcf" stroke-width="1.6"/></svg>
<svg class="a" style="left:2142px;top:459.8px;" width="26" height="26" viewBox="0 0 26 26"><circle cx="13" cy="13" r="8" fill="#cfcfcf"/><circle cx="13" cy="13" r="10.5" fill="none" stroke="#cfcfcf" stroke-width="1.2" stroke-dasharray="1.5 1.6"/></svg>
<svg class="a" style="left:2142px;top:498px;" width="26" height="26" viewBox="0 0 26 26"><rect x="9" y="4" width="14" height="14" fill="none" stroke="#cfcfcf" stroke-width="1.5"/><rect x="4" y="13" width="9" height="9" fill="#535353" stroke="#cfcfcf" stroke-width="1.5"/><rect x="7" y="16" width="3" height="3" fill="#cfcfcf"/></svg>
<svg class="a" style="left:2142px;top:550px;" width="26" height="26" viewBox="0 0 26 26"><path d="M11 5 H4 V23 H22 V15" fill="none" stroke="#cfcfcf" stroke-width="2"/><path d="M12 15 L22 5 M15 4 H23 V12" fill="none" stroke="#cfcfcf" stroke-width="2"/></svg>
<svg class="a" style="left:2142px;top:587px;" width="26" height="26" viewBox="0 0 26 26"><rect x="3.5" y="3.5" width="13" height="12" fill="none" stroke="#cfcfcf" stroke-width="1.6"/><rect x="8.5" y="10" width="14.5" height="12" fill="#535353" stroke="#cfcfcf" stroke-width="1.6"/></svg>
<div class="a" style="left:2137px;top:622.5px;width:35px;height:27.5px;border-radius:3px;background:#2e2e2e"></div>
<svg class="a" style="left:2142px;top:623.4px;" width="26" height="26" viewBox="0 0 26 26"><path d="M13 12 L3 17.5 L13 23 L23 17.5 Z" fill="none" stroke="#f0f0f0" stroke-width="2.5" stroke-linejoin="round"/><path d="M13 3 L3 9 L13 15 L23 9 Z" fill="#f0f0f0"/></svg>
<svg class="a" style="left:2142px;top:677px;" width="26" height="26" viewBox="0 0 26 26"><path d="M4 5 H22 V17 H11 L6 22 V17 H4 Z" fill="#cfcfcf" stroke="#cfcfcf" stroke-width="1" stroke-linejoin="round"/></svg>
<svg class="a" style="left:2142px;top:731px;" width="26" height="26" viewBox="0 0 26 26"><rect x="5" y="5" width="16" height="16" fill="none" stroke="#cfcfcf" stroke-width="1.5" stroke-dasharray="2.5 2"/><rect x="3" y="3" width="4" height="4" fill="#cfcfcf"/><rect x="19" y="3" width="4" height="4" fill="#cfcfcf"/><rect x="3" y="19" width="4" height="4" fill="#cfcfcf"/><rect x="19" y="19" width="4" height="4" fill="#cfcfcf"/><circle cx="13" cy="13" r="1.3" fill="#cfcfcf"/></svg>
<svg class="a" style="left:2142px;top:768.7px;" width="26" height="26" viewBox="0 0 26 26"><path d="M4.5 2 V24" stroke="#cfcfcf" stroke-width="1.5"/><rect x="7" y="5" width="10" height="6" fill="#cfcfcf"/><rect x="7" y="14" width="15" height="6" fill="#cfcfcf"/></svg>
<svg class="a" style="left:2142px;top:805.4px;" width="26" height="26" viewBox="0 0 26 26"><rect x="3.5" y="4" width="11" height="11" fill="none" stroke="#cfcfcf" stroke-width="1.6"/><rect x="10" y="10.5" width="12" height="12" fill="#cfcfcf"/><rect x="10" y="10.5" width="4.5" height="4.5" fill="#535353"/></svg>
<div class="a" style="left:2182px;top:99.3px;width:258px;height:34.5px;background:#424242;"></div>
<div class="a" style="left:2182.7px;top:99.3px;width:91px;height:35px;background:#535353;"></div>
<div class="a" style="left:2388px;top:99.3px;width:1px;height:34px;background:#3a3a3a;"></div>
<div class="t" style="left:2194.4px;top:107.8px;font-size:15.7px;font-weight:bold;color:#f2f2f2;transform:scaleX(0.8854);">Propriétés</div>
<div class="t" style="left:2286.0px;top:107.8px;font-size:15.7px;font-weight:bold;color:#c4c4c4;transform:scaleX(0.8774);">Bibliothèques</div>
<div class="t" style="left:2194.9px;top:150.0px;font-size:15.1px;-webkit-text-stroke:0.3px currentColor;color:#d6d6d6;transform:scaleX(0.9357);">Auc. sélect.</div>
<div class="a" style="left:2182px;top:177px;width:258px;height:2px;background:#474747;"></div>
<div class="t" style="left:2195.5px;top:194.6px;font-size:15.1px;-webkit-text-stroke:0.3px currentColor;color:#d6d6d6;transform:scaleX(0.9449);">Document</div>
<div class="t" style="left:2250.9px;top:231.3px;font-size:15.1px;-webkit-text-stroke:0.3px currentColor;color:#d0d0d0;transform:scaleX(0.9263);">Unités :</div>
<div class="a" style="left:2306.3px;top:224.6px;width:140px;height:25.6px;background:#4b4b4b;border:1px solid #5a5a5a;border-radius:4px"></div>
<div class="t" style="left:2314.8px;top:231.3px;font-size:15.1px;-webkit-text-stroke:0.3px currentColor;color:#f0f0f0;transform:scaleX(0.8991);">Pixels</div>
<div class="t" style="left:2201.8px;top:268.7px;font-size:15.1px;-webkit-text-stroke:0.3px currentColor;color:#d0d0d0;transform:scaleX(0.9276);">Plan de travail :</div>
<div class="a" style="left:2306.3px;top:261.9px;width:96.9px;height:26.6px;background:#4b4b4b;border:1px solid #4f4f4f;border-radius:4px"></div>
<div class="a" style="left:2307.3px;top:263px;width:71.4px;height:24.5px;background:#434343;"></div>
<div class="t" style="left:2312.7px;top:266.4px;font-size:15.1px;-webkit-text-stroke:0.3px currentColor;color:#f0f0f0;transform:scaleX(0.8220);">1</div>
<svg class="a" style="left:2382px;top:269.7px;" width="16" height="12" viewBox="0 0 16 12"><path d="M2.5 3.2 L8 8.8 L13.5 3.2" fill="none" stroke="#d0d0d0" stroke-width="1.7"/></svg>
<svg class="a" style="left:2419px;top:268px;" width="12" height="16" viewBox="0 0 12 16"><path d="M9 3 L3 8 L9 13 Z" fill="#6e6e6e"/></svg>
<div class="a" style="left:2306px;top:299.7px;width:140px;height:27.2px;border:1.2px solid #626262;border-radius:4px"></div>
<div class="t" style="left:2312.7px;top:305.7px;font-size:15.5px;font-weight:bold;color:#f0f0f0;transform:scaleX(0.8694);">Modif. les plans de travail</div>
<div class="a" style="left:2182px;top:343.5px;width:258px;height:2.2px;background:#474747;"></div>
<div class="t" style="left:2196.0px;top:363.0px;font-size:15.1px;-webkit-text-stroke:0.3px currentColor;color:#d6d6d6;transform:scaleX(0.9285);">Règle et grilles</div>
<svg class="a" style="left:2320px;top:359px;" width="24" height="23" viewBox="0 0 24 23"><path d="M1.5 1.5 H22.5 V7 H7 V22 H1.5 Z" fill="#c8c8c8"/><rect x="8.0" y="3" width="1.6" height="2.5" fill="#535353"/><rect x="11.3" y="3" width="1.6" height="2.5" fill="#535353"/><rect x="14.6" y="3" width="1.6" height="2.5" fill="#535353"/><rect x="17.9" y="3" width="1.6" height="2.5" fill="#535353"/><rect x="21.2" y="3" width="1.6" height="2.5" fill="#535353"/><rect x="3" y="8.0" width="2.5" height="1.6" fill="#535353"/><rect x="3" y="11.3" width="2.5" height="1.6" fill="#535353"/><rect x="3" y="14.6" width="2.5" height="1.6" fill="#535353"/><rect x="3" y="17.9" width="2.5" height="1.6" fill="#535353"/></svg>
<svg class="a" style="left:2359.5px;top:359.5px;" width="22" height="22" viewBox="0 0 22 22"><rect x="1" y="1" width="20" height="20" fill="none" stroke="#c8c8c8" stroke-width="1.4"/><path d="M7.7 1 V21 M14.3 1 V21 M1 7.7 H21 M1 14.3 H21" stroke="#c8c8c8" stroke-width="1.3"/></svg>
<svg class="a" style="left:2399px;top:359.5px;" width="22" height="22" viewBox="0 0 22 22"><rect x="1" y="1" width="20" height="20" fill="none" stroke="#c8c8c8" stroke-width="1.4"/><rect x="2.0" y="2.0" width="4" height="4" fill="#9a9a9a" opacity="1"/><rect x="6.5" y="2.0" width="4" height="4" fill="#9a9a9a" opacity="0"/><rect x="11.0" y="2.0" width="4" height="4" fill="#9a9a9a" opacity="1"/><rect x="15.5" y="2.0" width="4" height="4" fill="#9a9a9a" opacity="0"/><rect x="2.0" y="6.5" width="4" height="4" fill="#9a9a9a" opacity="0"/><rect x="6.5" y="6.5" width="4" height="4" fill="#9a9a9a" opacity="1"/><rect x="11.0" y="6.5" width="4" height="4" fill="#9a9a9a" opacity="0"/><rect x="15.5" y="6.5" width="4" height="4" fill="#9a9a9a" opacity="1"/><rect x="2.0" y="11.0" width="4" height="4" fill="#9a9a9a" opacity="1"/><rect x="6.5" y="11.0" width="4" height="4" fill="#9a9a9a" opacity="0"/><rect x="11.0" y="11.0" width="4" height="4" fill="#9a9a9a" opacity="1"/><rect x="15.5" y="11.0" width="4" height="4" fill="#9a9a9a" opacity="0"/><rect x="2.0" y="15.5" width="4" height="4" fill="#9a9a9a" opacity="0"/><rect x="6.5" y="15.5" width="4" height="4" fill="#9a9a9a" opacity="1"/><rect x="11.0" y="15.5" width="4" height="4" fill="#9a9a9a" opacity="0"/><rect x="15.5" y="15.5" width="4" height="4" fill="#9a9a9a" opacity="1"/></svg>
<div class="a" style="left:2182px;top:393.6px;width:258px;height:2.1px;background:#474747;"></div>
<div class="t" style="left:2196.0px;top:412.7px;font-size:15.1px;-webkit-text-stroke:0.3px currentColor;color:#d6d6d6;transform:scaleX(0.8589);">Repères</div>
<div class="a" style="left:2308.4px;top:405.9px;width:27.6px;height:27.7px;border-radius:4px;background:#2f2f2f"></div>
<svg class="a" style="left:2308.4px;top:405.9px;" width="28" height="28" viewBox="0 0 28 28"><path d="M7.5 3.5 V25 M11.5 3.5 V25 M3.5 10.3 H24 M3.5 19.3 H24" stroke="#f2f2f2" stroke-width="1.5"/></svg>
<svg class="a" style="left:2350px;top:406px;" width="26" height="28" viewBox="0 0 26 28"><path d="M5 3.5 V24 M9 3.5 V24 M1.5 10.3 H21 M1.5 19.3 H11" stroke="#c8c8c8" stroke-width="1.3"/><rect x="13.5" y="18" width="9" height="7" fill="#c8c8c8"/><path d="M15 18 V15 A3 3 0 0 1 21 15" fill="none" stroke="#c8c8c8" stroke-width="1.3"/></svg>
<div class="a" style="left:2386.7px;top:405.9px;width:27.7px;height:27.7px;border-radius:4px;background:#2f2f2f"></div>
<svg class="a" style="left:2386.7px;top:405.9px;" width="28" height="28" viewBox="0 0 28 28"><path d="M8.5 3.5 V25 M3.5 10.3 H25" stroke="#f2f2f2" stroke-width="1.5"/><path d="M15 6.5 L9.5 10.3 L15 14" fill="none" stroke="#f2f2f2" stroke-width="1.3"/><path d="M20 13 L15 19.5 H18.5 L16 25.5 L22 18 H18.5 Z" fill="#f2f2f2"/></svg>
<div class="a" style="left:2182px;top:443px;width:258px;height:2.2px;background:#474747;"></div>
<div class="t" style="left:2195.5px;top:462.4px;font-size:15.1px;-webkit-text-stroke:0.3px currentColor;color:#d6d6d6;transform:scaleX(0.9523);">Options du magnétisme</div>
<div class="a" style="left:2360.6px;top:456.6px;width:27.7px;height:26.6px;border-radius:4px;background:#2f2f2f"></div>
<svg class="a" style="left:2360.6px;top:456.6px;" width="28" height="27" viewBox="0 0 28 27"><path d="M6.8 4 V23" stroke="#f4f4f4" stroke-width="1.5"/><circle cx="6.8" cy="13.5" r="2.4" fill="#f4f4f4"/><path d="M12 9.8 H18.5 A3.8 3.8 0 0 1 18.5 17.4 H12" fill="none" stroke="#f4f4f4" stroke-width="2.6"/></svg>
<svg class="a" style="left:2402px;top:458.5px;" width="22" height="23" viewBox="0 0 22 23"><path d="M2 1.5 V22 M7 1.5 V22" stroke="#c8c8c8" stroke-width="1.5"/><path d="M2 3.0 H7" stroke="#c8c8c8" stroke-width="1"/><path d="M2 6.5 H7" stroke="#c8c8c8" stroke-width="1"/><path d="M2 10.0 H7" stroke="#c8c8c8" stroke-width="1"/><path d="M2 13.5 H7" stroke="#c8c8c8" stroke-width="1"/><path d="M2 17.0 H7" stroke="#c8c8c8" stroke-width="1"/><path d="M2 20.5 H7" stroke="#c8c8c8" stroke-width="1"/><path d="M10 7.5 H15.5 A3.8 3.8 0 0 1 15.5 15.2 H10" fill="none" stroke="#c8c8c8" stroke-width="2.4"/></svg>
<div class="a" style="left:2438.5px;top:456.6px;width:10px;height:26.6px;border-radius:4px;background:#2f2f2f"></div>
<div class="a" style="left:2182px;top:492.8px;width:258px;height:2.2px;background:#474747;"></div>
<div class="t" style="left:2196.0px;top:509.3px;font-size:15.1px;-webkit-text-stroke:0.3px currentColor;color:#d6d6d6;transform:scaleX(0.8897);">Préférences</div>
<div class="t" style="left:2192.8px;top:544.5px;font-size:15.1px;-webkit-text-stroke:0.3px currentColor;color:#d0d0d0;transform:scaleX(0.9424);">Incrément clavier :</div>
<div class="a" style="left:2317.5px;top:537.6px;width:75.6px;height:24px;background:#444444;border:1px solid #4c4c4c;border-radius:3px"></div>
<div class="t" style="left:2324.4px;top:540.7px;font-size:15.1px;-webkit-text-stroke:0.3px currentColor;color:#f0f0f0;transform:scaleX(0.9709);">1 px</div>
<div class="a" style="left:2199.2px;top:579.3px;width:16px;height:15.4px;border:1.5px solid #cdcdcd;border-radius:2.5px"></div>
<div class="t" style="left:2219.4px;top:581.4px;font-size:15.0px;-webkit-text-stroke:0.3px currentColor;color:#d6d6d6;transform:scaleX(0.9600);">Utiliser les limites d'aperçu</div>
<div class="a" style="left:2199.2px;top:610.7px;width:16px;height:15.4px;border:1.5px solid #cdcdcd;border-radius:2.5px"></div>
<div class="t" style="left:2219.4px;top:612.6px;font-size:15.0px;-webkit-text-stroke:0.3px currentColor;color:#d6d6d6;transform:scaleX(0.9343);">Rayons d'arrondi</div>
<div class="a" style="left:2199.2px;top:642.2px;width:16px;height:15.4px;border:1.5px solid #cdcdcd;border-radius:2.5px"></div>
<div class="t" style="left:2219.4px;top:644.2px;font-size:15.0px;-webkit-text-stroke:0.3px currentColor;color:#d6d6d6;transform:scaleX(0.9693);">Mettre à l'échelle les contours et les effets</div>
<div class="a" style="left:2182px;top:677.3px;width:258px;height:2.1px;background:#474747;"></div>
<div class="t" style="left:2195.5px;top:702.7px;font-size:15.1px;-webkit-text-stroke:0.3px currentColor;color:#d6d6d6;transform:scaleX(0.9202);">Sélections rapides</div>
<div class="a" style="left:2195.5px;top:731.8px;width:260px;height:27.1px;border:1.2px solid #666;border-radius:4px"></div>
<div class="t" style="left:2277.5px;top:737.7px;font-size:15.5px;font-weight:bold;color:#f0f0f0;transform:scaleX(0.8611);">Format de document</div>
<div class="a" style="left:2195.5px;top:772.3px;width:260px;height:26.6px;border:1.2px solid #666;border-radius:4px"></div>
<div class="t" style="left:2307.3px;top:778.2px;font-size:15.5px;font-weight:bold;color:#f0f0f0;transform:scaleX(0.8169);">Préférences</div>
<div class="a" style="left:706px;top:402.5px;width:852px;height:479.5px;background:#fff;border:1.8px solid #151515;border-radius:2px;box-shadow:1px 1.5px 2px rgba(0,0,0,.3)"></div>
<svg class="a" style="left:706px;top:402px;overflow:visible" width="852" height="480" viewBox="706 402 852 480"><svg x="1257.9" y="547.1" width="294.72" height="202.62" viewBox="0 0 32 22" preserveAspectRatio="none" shape-rendering="crispEdges"><rect x="12.00" y="0.00" width="8" height="1" fill="#520000"/><rect x="10.00" y="1.00" width="2" height="1" fill="#520000"/><rect x="12.00" y="1.00" width="1" height="1" fill="#720800"/><rect x="13.00" y="1.00" width="3" height="1" fill="#a31c00"/><rect x="16.00" y="1.00" width="2" height="1" fill="#906868"/><rect x="18.00" y="1.00" width="2" height="1" fill="#720800"/><rect x="20.00" y="1.00" width="2" height="1" fill="#520000"/><rect x="9.00" y="2.00" width="1" height="1" fill="#520000"/><rect x="10.00" y="2.00" width="2" height="1" fill="#a31c00"/><rect x="12.00" y="2.00" width="1" height="1" fill="#901400"/><rect x="13.00" y="2.00" width="1" height="1" fill="#720800"/><rect x="14.00" y="2.00" width="3" height="1" fill="#a31c00"/><rect x="17.00" y="2.00" width="2" height="1" fill="#906868"/><rect x="19.00" y="2.00" width="3" height="1" fill="#720800"/><rect x="22.00" y="2.00" width="1" height="1" fill="#520000"/><rect x="8.00" y="3.00" width="1" height="1" fill="#520000"/><rect x="9.00" y="3.00" width="1" height="1" fill="#a31c00"/><rect x="10.00" y="3.00" width="2" height="1" fill="#901400"/><rect x="12.00" y="3.00" width="2" height="1" fill="#720800"/><rect x="14.00" y="3.00" width="3" height="1" fill="#a31c00"/><rect x="17.00" y="3.00" width="2" height="1" fill="#906868"/><rect x="19.00" y="3.00" width="2" height="1" fill="#720800"/><rect x="21.00" y="3.00" width="2" height="1" fill="#901400"/><rect x="23.00" y="3.00" width="1" height="1" fill="#520000"/><rect x="7.00" y="4.00" width="1" height="1" fill="#520000"/><rect x="8.00" y="4.00" width="3" height="1" fill="#901400"/><rect x="11.00" y="4.00" width="2" height="1" fill="#720800"/><rect x="13.00" y="4.00" width="2" height="1" fill="#a31c00"/><rect x="15.00" y="4.00" width="3" height="1" fill="#906868"/><rect x="18.00" y="4.00" width="3" height="1" fill="#720800"/><rect x="21.00" y="4.00" width="2" height="1" fill="#901400"/><rect x="23.00" y="4.00" width="1" height="1" fill="#a31c00"/><rect x="24.00" y="4.00" width="1" height="1" fill="#520000"/><rect x="6.00" y="5.00" width="1" height="1" fill="#520000"/><rect x="7.00" y="5.00" width="2" height="1" fill="#901400"/><rect x="9.00" y="5.00" width="1" height="1" fill="#906868"/><rect x="10.00" y="5.00" width="2" height="1" fill="#720800"/><rect x="12.00" y="5.00" width="2" height="1" fill="#a31c00"/><rect x="14.00" y="5.00" width="3" height="1" fill="#906868"/><rect x="17.00" y="5.00" width="2" height="1" fill="#720800"/><rect x="19.00" y="5.00" width="2" height="1" fill="#901400"/><rect x="21.00" y="5.00" width="1" height="1" fill="#a31c00"/><rect x="22.00" y="5.00" width="2" height="1" fill="#901400"/><rect x="24.00" y="5.00" width="1" height="1" fill="#720800"/><rect x="25.00" y="5.00" width="5" height="1" fill="#520000"/><rect x="6.00" y="6.00" width="1" height="1" fill="#520000"/><rect x="7.00" y="6.00" width="1" height="1" fill="#901400"/><rect x="8.00" y="6.00" width="1" height="1" fill="#906868"/><rect x="9.00" y="6.00" width="2" height="1" fill="#720800"/><rect x="11.00" y="6.00" width="1" height="1" fill="#a31c00"/><rect x="12.00" y="6.00" width="2" height="1" fill="#901400"/><rect x="14.00" y="6.00" width="2" height="1" fill="#906868"/><rect x="16.00" y="6.00" width="2" height="1" fill="#720800"/><rect x="18.00" y="6.00" width="4" height="1" fill="#a31c00"/><rect x="22.00" y="6.00" width="1" height="1" fill="#901400"/><rect x="23.00" y="6.00" width="2" height="1" fill="#720800"/><rect x="25.00" y="6.00" width="1" height="1" fill="#520000"/><rect x="26.00" y="6.00" width="4" height="1" fill="#a31c00"/><rect x="30.00" y="6.00" width="1" height="1" fill="#520000"/><rect x="5.00" y="7.00" width="1" height="1" fill="#520000"/><rect x="6.00" y="7.00" width="1" height="1" fill="#901400"/><rect x="7.00" y="7.00" width="2" height="1" fill="#906868"/><rect x="9.00" y="7.00" width="2" height="1" fill="#720800"/><rect x="11.00" y="7.00" width="3" height="1" fill="#901400"/><rect x="14.00" y="7.00" width="3" height="1" fill="#720800"/><rect x="17.00" y="7.00" width="4" height="1" fill="#a31c00"/><rect x="21.00" y="7.00" width="1" height="1" fill="#901400"/><rect x="22.00" y="7.00" width="2" height="1" fill="#720800"/><rect x="24.00" y="7.00" width="2" height="1" fill="#906868"/><rect x="26.00" y="7.00" width="1" height="1" fill="#520000"/><rect x="27.00" y="7.00" width="1" height="1" fill="#720800"/><rect x="28.00" y="7.00" width="3" height="1" fill="#a31c00"/><rect x="31.00" y="7.00" width="1" height="1" fill="#520000"/><rect x="5.00" y="8.00" width="1" height="1" fill="#520000"/><rect x="6.00" y="8.00" width="1" height="1" fill="#901400"/><rect x="7.00" y="8.00" width="1" height="1" fill="#906868"/><rect x="8.00" y="8.00" width="3" height="1" fill="#720800"/><rect x="11.00" y="8.00" width="2" height="1" fill="#a31c00"/><rect x="13.00" y="8.00" width="1" height="1" fill="#901400"/><rect x="14.00" y="8.00" width="3" height="1" fill="#a31c00"/><rect x="17.00" y="8.00" width="1" height="1" fill="#720800"/><rect x="18.00" y="8.00" width="2" height="1" fill="#901400"/><rect x="20.00" y="8.00" width="1" height="1" fill="#720800"/><rect x="21.00" y="8.00" width="3" height="1" fill="#906868"/><rect x="24.00" y="8.00" width="4" height="1" fill="#520000"/><rect x="28.00" y="8.00" width="2" height="1" fill="#a31c00"/><rect x="30.00" y="8.00" width="1" height="1" fill="#720800"/><rect x="31.00" y="8.00" width="1" height="1" fill="#520000"/><rect x="4.00" y="9.00" width="2" height="1" fill="#520000"/><rect x="6.00" y="9.00" width="1" height="1" fill="#901400"/><rect x="7.00" y="9.00" width="2" height="1" fill="#720800"/><rect x="9.00" y="9.00" width="1" height="1" fill="#901400"/><rect x="10.00" y="9.00" width="5" height="1" fill="#a31c00"/><rect x="15.00" y="9.00" width="3" height="1" fill="#720800"/><rect x="18.00" y="9.00" width="2" height="1" fill="#901400"/><rect x="20.00" y="9.00" width="1" height="1" fill="#906868"/><rect x="21.00" y="9.00" width="4" height="1" fill="#520000"/><rect x="25.00" y="9.00" width="3" height="1" fill="#a31c00"/><rect x="28.00" y="9.00" width="1" height="1" fill="#720800"/><rect x="29.00" y="9.00" width="2" height="1" fill="#520000"/><rect x="2.00" y="10.00" width="2" height="1" fill="#520000"/><rect x="4.00" y="10.00" width="1" height="1" fill="#a31c00"/><rect x="5.00" y="10.00" width="1" height="1" fill="#520000"/><rect x="6.00" y="10.00" width="1" height="1" fill="#901400"/><rect x="7.00" y="10.00" width="1" height="1" fill="#720800"/><rect x="8.00" y="10.00" width="3" height="1" fill="#a31c00"/><rect x="11.00" y="10.00" width="1" height="1" fill="#901400"/><rect x="12.00" y="10.00" width="3" height="1" fill="#720800"/><rect x="15.00" y="10.00" width="6" height="1" fill="#520000"/><rect x="21.00" y="10.00" width="4" height="1" fill="#a31c00"/><rect x="25.00" y="10.00" width="5" height="1" fill="#520000"/><rect x="1.00" y="11.00" width="1" height="1" fill="#520000"/><rect x="2.00" y="11.00" width="2" height="1" fill="#a31c00"/><rect x="4.00" y="11.00" width="2" height="1" fill="#520000"/><rect x="6.00" y="11.00" width="3" height="1" fill="#a31c00"/><rect x="9.00" y="11.00" width="1" height="1" fill="#901400"/><rect x="10.00" y="11.00" width="5" height="1" fill="#520000"/><rect x="15.00" y="11.00" width="7" height="1" fill="#a31c00"/><rect x="22.00" y="11.00" width="2" height="1" fill="#720800"/><rect x="24.00" y="11.00" width="4" height="1" fill="#520000"/><rect x="0.00" y="12.00" width="1" height="1" fill="#520000"/><rect x="1.00" y="12.00" width="2" height="1" fill="#a31c00"/><rect x="3.00" y="12.00" width="1" height="1" fill="#720800"/><rect x="4.00" y="12.00" width="6" height="1" fill="#520000"/><rect x="10.00" y="12.00" width="6" height="1" fill="#a31c00"/><rect x="16.00" y="12.00" width="4" height="1" fill="#720800"/><rect x="20.00" y="12.00" width="4" height="1" fill="#520000"/><rect x="24.00" y="12.00" width="1" height="1" fill="#901400"/><rect x="25.00" y="12.00" width="1" height="1" fill="#a31c00"/><rect x="26.00" y="12.00" width="1" height="1" fill="#520000"/><rect x="0.00" y="13.00" width="1" height="1" fill="#520000"/><rect x="1.00" y="13.00" width="10" height="1" fill="#a31c00"/><rect x="11.00" y="13.00" width="5" height="1" fill="#720800"/><rect x="16.00" y="13.00" width="4" height="1" fill="#520000"/><rect x="20.00" y="13.00" width="2" height="1" fill="#906868"/><rect x="22.00" y="13.00" width="2" height="1" fill="#901400"/><rect x="24.00" y="13.00" width="2" height="1" fill="#a31c00"/><rect x="26.00" y="13.00" width="1" height="1" fill="#520000"/><rect x="1.00" y="14.00" width="1" height="1" fill="#520000"/><rect x="2.00" y="14.00" width="9" height="1" fill="#720800"/><rect x="11.00" y="14.00" width="5" height="1" fill="#520000"/><rect x="16.00" y="14.00" width="2" height="1" fill="#901400"/><rect x="18.00" y="14.00" width="2" height="1" fill="#906868"/><rect x="20.00" y="14.00" width="2" height="1" fill="#901400"/><rect x="22.00" y="14.00" width="4" height="1" fill="#a31c00"/><rect x="26.00" y="14.00" width="1" height="1" fill="#520000"/><rect x="2.00" y="15.00" width="9" height="1" fill="#520000"/><rect x="11.00" y="15.00" width="3" height="1" fill="#720800"/><rect x="14.00" y="15.00" width="4" height="1" fill="#901400"/><rect x="18.00" y="15.00" width="1" height="1" fill="#a31c00"/><rect x="19.00" y="15.00" width="1" height="1" fill="#901400"/><rect x="20.00" y="15.00" width="5" height="1" fill="#a31c00"/><rect x="25.00" y="15.00" width="1" height="1" fill="#520000"/><rect x="6.00" y="16.00" width="1" height="1" fill="#520000"/><rect x="7.00" y="16.00" width="1" height="1" fill="#906868"/><rect x="8.00" y="16.00" width="5" height="1" fill="#720800"/><rect x="13.00" y="16.00" width="11" height="1" fill="#a31c00"/><rect x="24.00" y="16.00" width="1" height="1" fill="#901400"/><rect x="25.00" y="16.00" width="1" height="1" fill="#520000"/><rect x="7.00" y="17.00" width="1" height="1" fill="#520000"/><rect x="8.00" y="17.00" width="3" height="1" fill="#720800"/><rect x="11.00" y="17.00" width="3" height="1" fill="#a31c00"/><rect x="14.00" y="17.00" width="1" height="1" fill="#901400"/><rect x="15.00" y="17.00" width="2" height="1" fill="#a31c00"/><rect x="17.00" y="17.00" width="1" height="1" fill="#906868"/><rect x="18.00" y="17.00" width="3" height="1" fill="#a31c00"/><rect x="21.00" y="17.00" width="1" height="1" fill="#901400"/><rect x="22.00" y="17.00" width="1" height="1" fill="#720800"/><rect x="23.00" y="17.00" width="1" height="1" fill="#901400"/><rect x="24.00" y="17.00" width="1" height="1" fill="#520000"/><rect x="8.00" y="18.00" width="1" height="1" fill="#520000"/><rect x="9.00" y="18.00" width="3" height="1" fill="#901400"/><rect x="12.00" y="18.00" width="1" height="1" fill="#906868"/><rect x="13.00" y="18.00" width="3" height="1" fill="#a31c00"/><rect x="16.00" y="18.00" width="1" height="1" fill="#906868"/><rect x="17.00" y="18.00" width="3" height="1" fill="#901400"/><rect x="20.00" y="18.00" width="1" height="1" fill="#720800"/><rect x="21.00" y="18.00" width="2" height="1" fill="#a31c00"/><rect x="23.00" y="18.00" width="1" height="1" fill="#520000"/><rect x="9.00" y="19.00" width="1" height="1" fill="#520000"/><rect x="10.00" y="19.00" width="3" height="1" fill="#901400"/><rect x="13.00" y="19.00" width="4" height="1" fill="#906868"/><rect x="17.00" y="19.00" width="3" height="1" fill="#720800"/><rect x="20.00" y="19.00" width="2" height="1" fill="#a31c00"/><rect x="22.00" y="19.00" width="1" height="1" fill="#520000"/><rect x="10.00" y="20.00" width="2" height="1" fill="#520000"/><rect x="12.00" y="20.00" width="1" height="1" fill="#906868"/><rect x="13.00" y="20.00" width="1" height="1" fill="#a31c00"/><rect x="14.00" y="20.00" width="1" height="1" fill="#906868"/><rect x="15.00" y="20.00" width="2" height="1" fill="#901400"/><rect x="17.00" y="20.00" width="2" height="1" fill="#720800"/><rect x="19.00" y="20.00" width="1" height="1" fill="#a31c00"/><rect x="20.00" y="20.00" width="2" height="1" fill="#520000"/><rect x="12.00" y="21.00" width="8" height="1" fill="#520000"/></svg><svg x="1001.5" y="717.0" width="188.48" height="129.58" viewBox="0 0 32 22" preserveAspectRatio="none" shape-rendering="crispEdges"><rect x="12.00" y="0.00" width="8" height="1" fill="#1d2636"/><rect x="10.00" y="1.00" width="2" height="1" fill="#1d2636"/><rect x="12.00" y="1.00" width="1" height="1" fill="#22313f"/><rect x="13.00" y="1.00" width="3" height="1" fill="#4a3468"/><rect x="16.00" y="1.00" width="2" height="1" fill="#5a4c7c"/><rect x="18.00" y="1.00" width="2" height="1" fill="#22313f"/><rect x="20.00" y="1.00" width="2" height="1" fill="#1d2636"/><rect x="9.00" y="2.00" width="1" height="1" fill="#1d2636"/><rect x="10.00" y="2.00" width="2" height="1" fill="#4a3468"/><rect x="12.00" y="2.00" width="1" height="1" fill="#2f4264"/><rect x="13.00" y="2.00" width="1" height="1" fill="#22313f"/><rect x="14.00" y="2.00" width="3" height="1" fill="#4a3468"/><rect x="17.00" y="2.00" width="2" height="1" fill="#5a4c7c"/><rect x="19.00" y="2.00" width="3" height="1" fill="#22313f"/><rect x="22.00" y="2.00" width="1" height="1" fill="#1d2636"/><rect x="8.00" y="3.00" width="1" height="1" fill="#1d2636"/><rect x="9.00" y="3.00" width="1" height="1" fill="#4a3468"/><rect x="10.00" y="3.00" width="2" height="1" fill="#2f4264"/><rect x="12.00" y="3.00" width="2" height="1" fill="#22313f"/><rect x="14.00" y="3.00" width="3" height="1" fill="#4a3468"/><rect x="17.00" y="3.00" width="2" height="1" fill="#5a4c7c"/><rect x="19.00" y="3.00" width="2" height="1" fill="#22313f"/><rect x="21.00" y="3.00" width="2" height="1" fill="#2f4264"/><rect x="23.00" y="3.00" width="1" height="1" fill="#1d2636"/><rect x="7.00" y="4.00" width="1" height="1" fill="#1d2636"/><rect x="8.00" y="4.00" width="3" height="1" fill="#2f4264"/><rect x="11.00" y="4.00" width="2" height="1" fill="#22313f"/><rect x="13.00" y="4.00" width="2" height="1" fill="#4a3468"/><rect x="15.00" y="4.00" width="3" height="1" fill="#5a4c7c"/><rect x="18.00" y="4.00" width="3" height="1" fill="#22313f"/><rect x="21.00" y="4.00" width="2" height="1" fill="#2f4264"/><rect x="23.00" y="4.00" width="1" height="1" fill="#4a3468"/><rect x="24.00" y="4.00" width="1" height="1" fill="#1d2636"/><rect x="6.00" y="5.00" width="1" height="1" fill="#1d2636"/><rect x="7.00" y="5.00" width="2" height="1" fill="#2f4264"/><rect x="9.00" y="5.00" width="1" height="1" fill="#5a4c7c"/><rect x="10.00" y="5.00" width="2" height="1" fill="#22313f"/><rect x="12.00" y="5.00" width="2" height="1" fill="#4a3468"/><rect x="14.00" y="5.00" width="3" height="1" fill="#5a4c7c"/><rect x="17.00" y="5.00" width="2" height="1" fill="#22313f"/><rect x="19.00" y="5.00" width="2" height="1" fill="#2f4264"/><rect x="21.00" y="5.00" width="1" height="1" fill="#4a3468"/><rect x="22.00" y="5.00" width="2" height="1" fill="#2f4264"/><rect x="24.00" y="5.00" width="1" height="1" fill="#22313f"/><rect x="25.00" y="5.00" width="5" height="1" fill="#1d2636"/><rect x="6.00" y="6.00" width="1" height="1" fill="#1d2636"/><rect x="7.00" y="6.00" width="1" height="1" fill="#2f4264"/><rect x="8.00" y="6.00" width="1" height="1" fill="#5a4c7c"/><rect x="9.00" y="6.00" width="2" height="1" fill="#22313f"/><rect x="11.00" y="6.00" width="1" height="1" fill="#4a3468"/><rect x="12.00" y="6.00" width="2" height="1" fill="#2f4264"/><rect x="14.00" y="6.00" width="2" height="1" fill="#5a4c7c"/><rect x="16.00" y="6.00" width="2" height="1" fill="#22313f"/><rect x="18.00" y="6.00" width="4" height="1" fill="#4a3468"/><rect x="22.00" y="6.00" width="1" height="1" fill="#2f4264"/><rect x="23.00" y="6.00" width="2" height="1" fill="#22313f"/><rect x="25.00" y="6.00" width="1" height="1" fill="#1d2636"/><rect x="26.00" y="6.00" width="4" height="1" fill="#4a3468"/><rect x="30.00" y="6.00" width="1" height="1" fill="#1d2636"/><rect x="5.00" y="7.00" width="1" height="1" fill="#1d2636"/><rect x="6.00" y="7.00" width="1" height="1" fill="#2f4264"/><rect x="7.00" y="7.00" width="2" height="1" fill="#5a4c7c"/><rect x="9.00" y="7.00" width="2" height="1" fill="#22313f"/><rect x="11.00" y="7.00" width="3" height="1" fill="#2f4264"/><rect x="14.00" y="7.00" width="3" height="1" fill="#22313f"/><rect x="17.00" y="7.00" width="4" height="1" fill="#4a3468"/><rect x="21.00" y="7.00" width="1" height="1" fill="#2f4264"/><rect x="22.00" y="7.00" width="2" height="1" fill="#22313f"/><rect x="24.00" y="7.00" width="2" height="1" fill="#5a4c7c"/><rect x="26.00" y="7.00" width="1" height="1" fill="#1d2636"/><rect x="27.00" y="7.00" width="1" height="1" fill="#44609c"/><rect x="28.00" y="7.00" width="3" height="1" fill="#4a3468"/><rect x="31.00" y="7.00" width="1" height="1" fill="#1d2636"/><rect x="5.00" y="8.00" width="1" height="1" fill="#1d2636"/><rect x="6.00" y="8.00" width="1" height="1" fill="#2f4264"/><rect x="7.00" y="8.00" width="1" height="1" fill="#5a4c7c"/><rect x="8.00" y="8.00" width="3" height="1" fill="#22313f"/><rect x="11.00" y="8.00" width="2" height="1" fill="#4a3468"/><rect x="13.00" y="8.00" width="1" height="1" fill="#2f4264"/><rect x="14.00" y="8.00" width="3" height="1" fill="#4a3468"/><rect x="17.00" y="8.00" width="1" height="1" fill="#22313f"/><rect x="18.00" y="8.00" width="2" height="1" fill="#2f4264"/><rect x="20.00" y="8.00" width="1" height="1" fill="#22313f"/><rect x="21.00" y="8.00" width="3" height="1" fill="#5a4c7c"/><rect x="24.00" y="8.00" width="4" height="1" fill="#1d2636"/><rect x="28.00" y="8.00" width="2" height="1" fill="#4a3468"/><rect x="30.00" y="8.00" width="1" height="1" fill="#44609c"/><rect x="31.00" y="8.00" width="1" height="1" fill="#1d2636"/><rect x="4.00" y="9.00" width="2" height="1" fill="#1d2636"/><rect x="6.00" y="9.00" width="1" height="1" fill="#2f4264"/><rect x="7.00" y="9.00" width="2" height="1" fill="#22313f"/><rect x="9.00" y="9.00" width="1" height="1" fill="#2f4264"/><rect x="10.00" y="9.00" width="5" height="1" fill="#4a3468"/><rect x="15.00" y="9.00" width="3" height="1" fill="#22313f"/><rect x="18.00" y="9.00" width="2" height="1" fill="#2f4264"/><rect x="20.00" y="9.00" width="1" height="1" fill="#5a4c7c"/><rect x="21.00" y="9.00" width="4" height="1" fill="#1d2636"/><rect x="25.00" y="9.00" width="3" height="1" fill="#4a3468"/><rect x="28.00" y="9.00" width="1" height="1" fill="#44609c"/><rect x="29.00" y="9.00" width="2" height="1" fill="#1d2636"/><rect x="2.00" y="10.00" width="2" height="1" fill="#1d2636"/><rect x="4.00" y="10.00" width="1" height="1" fill="#4a3468"/><rect x="5.00" y="10.00" width="1" height="1" fill="#1d2636"/><rect x="6.00" y="10.00" width="1" height="1" fill="#2f4264"/><rect x="7.00" y="10.00" width="1" height="1" fill="#22313f"/><rect x="8.00" y="10.00" width="3" height="1" fill="#4a3468"/><rect x="11.00" y="10.00" width="1" height="1" fill="#2f4264"/><rect x="12.00" y="10.00" width="3" height="1" fill="#22313f"/><rect x="15.00" y="10.00" width="6" height="1" fill="#1d2636"/><rect x="21.00" y="10.00" width="4" height="1" fill="#4a3468"/><rect x="25.00" y="10.00" width="5" height="1" fill="#1d2636"/><rect x="1.00" y="11.00" width="1" height="1" fill="#1d2636"/><rect x="2.00" y="11.00" width="2" height="1" fill="#4a3468"/><rect x="4.00" y="11.00" width="2" height="1" fill="#1d2636"/><rect x="6.00" y="11.00" width="3" height="1" fill="#4a3468"/><rect x="9.00" y="11.00" width="1" height="1" fill="#2f4264"/><rect x="10.00" y="11.00" width="5" height="1" fill="#1d2636"/><rect x="15.00" y="11.00" width="7" height="1" fill="#4a3468"/><rect x="22.00" y="11.00" width="2" height="1" fill="#44609c"/><rect x="24.00" y="11.00" width="4" height="1" fill="#1d2636"/><rect x="0.00" y="12.00" width="1" height="1" fill="#1d2636"/><rect x="1.00" y="12.00" width="2" height="1" fill="#4a3468"/><rect x="3.00" y="12.00" width="1" height="1" fill="#44609c"/><rect x="4.00" y="12.00" width="6" height="1" fill="#1d2636"/><rect x="10.00" y="12.00" width="6" height="1" fill="#4a3468"/><rect x="16.00" y="12.00" width="4" height="1" fill="#44609c"/><rect x="20.00" y="12.00" width="4" height="1" fill="#1d2636"/><rect x="24.00" y="12.00" width="1" height="1" fill="#2f4264"/><rect x="25.00" y="12.00" width="1" height="1" fill="#4a3468"/><rect x="26.00" y="12.00" width="1" height="1" fill="#1d2636"/><rect x="0.00" y="13.00" width="1" height="1" fill="#1d2636"/><rect x="1.00" y="13.00" width="10" height="1" fill="#4a3468"/><rect x="11.00" y="13.00" width="5" height="1" fill="#44609c"/><rect x="16.00" y="13.00" width="4" height="1" fill="#1d2636"/><rect x="20.00" y="13.00" width="2" height="1" fill="#5a4c7c"/><rect x="22.00" y="13.00" width="2" height="1" fill="#2f4264"/><rect x="24.00" y="13.00" width="2" height="1" fill="#4a3468"/><rect x="26.00" y="13.00" width="1" height="1" fill="#1d2636"/><rect x="1.00" y="14.00" width="1" height="1" fill="#1d2636"/><rect x="2.00" y="14.00" width="9" height="1" fill="#44609c"/><rect x="11.00" y="14.00" width="5" height="1" fill="#1d2636"/><rect x="16.00" y="14.00" width="2" height="1" fill="#2f4264"/><rect x="18.00" y="14.00" width="2" height="1" fill="#5a4c7c"/><rect x="20.00" y="14.00" width="2" height="1" fill="#2f4264"/><rect x="22.00" y="14.00" width="4" height="1" fill="#4a3468"/><rect x="26.00" y="14.00" width="1" height="1" fill="#1d2636"/><rect x="2.00" y="15.00" width="9" height="1" fill="#1d2636"/><rect x="11.00" y="15.00" width="3" height="1" fill="#22313f"/><rect x="14.00" y="15.00" width="4" height="1" fill="#2f4264"/><rect x="18.00" y="15.00" width="1" height="1" fill="#4a3468"/><rect x="19.00" y="15.00" width="1" height="1" fill="#2f4264"/><rect x="20.00" y="15.00" width="5" height="1" fill="#4a3468"/><rect x="25.00" y="15.00" width="1" height="1" fill="#1d2636"/><rect x="6.00" y="16.00" width="1" height="1" fill="#1d2636"/><rect x="7.00" y="16.00" width="1" height="1" fill="#5a4c7c"/><rect x="8.00" y="16.00" width="5" height="1" fill="#22313f"/><rect x="13.00" y="16.00" width="11" height="1" fill="#4a3468"/><rect x="24.00" y="16.00" width="1" height="1" fill="#2f4264"/><rect x="25.00" y="16.00" width="1" height="1" fill="#1d2636"/><rect x="7.00" y="17.00" width="1" height="1" fill="#1d2636"/><rect x="8.00" y="17.00" width="3" height="1" fill="#22313f"/><rect x="11.00" y="17.00" width="3" height="1" fill="#4a3468"/><rect x="14.00" y="17.00" width="1" height="1" fill="#2f4264"/><rect x="15.00" y="17.00" width="2" height="1" fill="#4a3468"/><rect x="17.00" y="17.00" width="1" height="1" fill="#5a4c7c"/><rect x="18.00" y="17.00" width="3" height="1" fill="#4a3468"/><rect x="21.00" y="17.00" width="1" height="1" fill="#2f4264"/><rect x="22.00" y="17.00" width="1" height="1" fill="#22313f"/><rect x="23.00" y="17.00" width="1" height="1" fill="#2f4264"/><rect x="24.00" y="17.00" width="1" height="1" fill="#1d2636"/><rect x="8.00" y="18.00" width="1" height="1" fill="#1d2636"/><rect x="9.00" y="18.00" width="3" height="1" fill="#2f4264"/><rect x="12.00" y="18.00" width="1" height="1" fill="#5a4c7c"/><rect x="13.00" y="18.00" width="3" height="1" fill="#4a3468"/><rect x="16.00" y="18.00" width="1" height="1" fill="#5a4c7c"/><rect x="17.00" y="18.00" width="3" height="1" fill="#2f4264"/><rect x="20.00" y="18.00" width="1" height="1" fill="#22313f"/><rect x="21.00" y="18.00" width="2" height="1" fill="#4a3468"/><rect x="23.00" y="18.00" width="1" height="1" fill="#1d2636"/><rect x="9.00" y="19.00" width="1" height="1" fill="#1d2636"/><rect x="10.00" y="19.00" width="3" height="1" fill="#2f4264"/><rect x="13.00" y="19.00" width="4" height="1" fill="#5a4c7c"/><rect x="17.00" y="19.00" width="3" height="1" fill="#22313f"/><rect x="20.00" y="19.00" width="2" height="1" fill="#4a3468"/><rect x="22.00" y="19.00" width="1" height="1" fill="#1d2636"/><rect x="10.00" y="20.00" width="2" height="1" fill="#1d2636"/><rect x="12.00" y="20.00" width="1" height="1" fill="#5a4c7c"/><rect x="13.00" y="20.00" width="1" height="1" fill="#4a3468"/><rect x="14.00" y="20.00" width="1" height="1" fill="#5a4c7c"/><rect x="15.00" y="20.00" width="2" height="1" fill="#2f4264"/><rect x="17.00" y="20.00" width="2" height="1" fill="#22313f"/><rect x="19.00" y="20.00" width="1" height="1" fill="#4a3468"/><rect x="20.00" y="20.00" width="2" height="1" fill="#1d2636"/><rect x="12.00" y="21.00" width="8" height="1" fill="#1d2636"/></svg><svg x="965" y="623.6" width="105.60" height="87.21" viewBox="0 0 11 9" preserveAspectRatio="none" shape-rendering="crispEdges"><rect x="1.00" y="0.00" width="3" height="1" fill="#fffa66"/><rect x="7.00" y="0.00" width="3" height="1" fill="#fffa66"/><rect x="0.00" y="1.00" width="5" height="1" fill="#fffa66"/><rect x="6.00" y="1.00" width="2" height="1" fill="#fffa66"/><rect x="8.00" y="1.00" width="1" height="1" fill="#ffffff"/><rect x="9.00" y="1.00" width="2" height="1" fill="#fffa66"/><rect x="0.00" y="2.00" width="9" height="1" fill="#fffa66"/><rect x="9.00" y="2.00" width="1" height="1" fill="#ffffff"/><rect x="10.00" y="2.00" width="1" height="1" fill="#fffa66"/><rect x="0.00" y="3.00" width="1" height="1" fill="#d2c446"/><rect x="1.00" y="3.00" width="10" height="1" fill="#fffa66"/><rect x="1.00" y="4.00" width="1" height="1" fill="#d2c446"/><rect x="2.00" y="4.00" width="8" height="1" fill="#fffa66"/><rect x="2.00" y="5.00" width="1" height="1" fill="#d2c446"/><rect x="3.00" y="5.00" width="6" height="1" fill="#fffa66"/><rect x="3.00" y="6.00" width="1" height="1" fill="#d2c446"/><rect x="4.00" y="6.00" width="4" height="1" fill="#fffa66"/><rect x="4.00" y="7.00" width="1" height="1" fill="#d2c446"/><rect x="5.00" y="7.00" width="2" height="1" fill="#fffa66"/><rect x="5.00" y="8.00" width="1" height="1" fill="#d2c446"/></svg><svg x="1141.35" y="603" width="43.00" height="86.00" viewBox="0 0 10 20" preserveAspectRatio="none" shape-rendering="crispEdges"><rect x="7.00" y="0.00" width="1" height="1" fill="#6c0c84"/><rect x="3.00" y="1.00" width="1" height="1" fill="#6c0c84"/><rect x="6.00" y="1.00" width="1" height="1" fill="#a424c4"/><rect x="3.00" y="2.00" width="1" height="1" fill="#a424c4"/><rect x="3.00" y="3.00" width="1" height="1" fill="#d83cf8"/><rect x="2.00" y="4.00" width="2" height="1" fill="#6c0c84"/><rect x="7.00" y="4.00" width="1" height="1" fill="#d83cf8"/><rect x="1.00" y="5.00" width="3" height="1" fill="#6c0c84"/><rect x="7.00" y="5.00" width="1" height="1" fill="#d83cf8"/><rect x="3.00" y="6.00" width="1" height="1" fill="#a424c4"/><rect x="4.00" y="6.00" width="1" height="1" fill="#6c0c84"/><rect x="6.00" y="6.00" width="1" height="1" fill="#6c0c84"/><rect x="7.00" y="6.00" width="1" height="1" fill="#d83cf8"/><rect x="3.00" y="7.00" width="1" height="1" fill="#a424c4"/><rect x="4.00" y="7.00" width="1" height="1" fill="#6c0c84"/><rect x="6.00" y="7.00" width="1" height="1" fill="#6c0c84"/><rect x="7.00" y="7.00" width="1" height="1" fill="#d83cf8"/><rect x="2.00" y="8.00" width="3" height="1" fill="#d83cf8"/><rect x="6.00" y="8.00" width="2" height="1" fill="#6c0c84"/><rect x="1.00" y="9.00" width="2" height="1" fill="#d83cf8"/><rect x="4.00" y="9.00" width="2" height="1" fill="#6c0c84"/><rect x="6.00" y="9.00" width="1" height="1" fill="#d83cf8"/><rect x="7.00" y="9.00" width="1" height="1" fill="#6c0c84"/><rect x="1.00" y="10.00" width="2" height="1" fill="#d83cf8"/><rect x="3.00" y="10.00" width="1" height="1" fill="#6c0c84"/><rect x="4.00" y="10.00" width="1" height="1" fill="#a424c4"/><rect x="5.00" y="10.00" width="1" height="1" fill="#6c0c84"/><rect x="6.00" y="10.00" width="1" height="1" fill="#a424c4"/><rect x="7.00" y="10.00" width="1" height="1" fill="#6c0c84"/><rect x="1.00" y="11.00" width="1" height="1" fill="#6c0c84"/><rect x="2.00" y="11.00" width="2" height="1" fill="#d83cf8"/><rect x="4.00" y="11.00" width="2" height="1" fill="#a424c4"/><rect x="6.00" y="11.00" width="1" height="1" fill="#6c0c84"/><rect x="7.00" y="11.00" width="1" height="1" fill="#d83cf8"/><rect x="0.00" y="12.00" width="1" height="1" fill="#6c0c84"/><rect x="1.00" y="12.00" width="1" height="1" fill="#d83cf8"/><rect x="3.00" y="12.00" width="1" height="1" fill="#6c0c84"/><rect x="4.00" y="12.00" width="2" height="1" fill="#a424c4"/><rect x="6.00" y="12.00" width="1" height="1" fill="#6c0c84"/><rect x="7.00" y="12.00" width="1" height="1" fill="#d83cf8"/><rect x="3.00" y="13.00" width="1" height="1" fill="#6c0c84"/><rect x="4.00" y="13.00" width="2" height="1" fill="#d83cf8"/><rect x="6.00" y="13.00" width="1" height="1" fill="#a424c4"/><rect x="7.00" y="13.00" width="1" height="1" fill="#6c0c84"/><rect x="9.00" y="13.00" width="1" height="1" fill="#d83cf8"/><rect x="0.00" y="14.00" width="4" height="1" fill="#d83cf8"/><rect x="4.00" y="14.00" width="1" height="1" fill="#6c0c84"/><rect x="5.00" y="14.00" width="1" height="1" fill="#d83cf8"/><rect x="6.00" y="14.00" width="3" height="1" fill="#6c0c84"/><rect x="9.00" y="14.00" width="1" height="1" fill="#d83cf8"/><rect x="1.00" y="15.00" width="1" height="1" fill="#6c0c84"/><rect x="2.00" y="15.00" width="4" height="1" fill="#d83cf8"/><rect x="6.00" y="15.00" width="1" height="1" fill="#a424c4"/><rect x="7.00" y="15.00" width="3" height="1" fill="#6c0c84"/><rect x="1.00" y="16.00" width="1" height="1" fill="#d83cf8"/><rect x="2.00" y="16.00" width="2" height="1" fill="#a424c4"/><rect x="4.00" y="16.00" width="2" height="1" fill="#d83cf8"/><rect x="6.00" y="16.00" width="2" height="1" fill="#a424c4"/><rect x="8.00" y="16.00" width="1" height="1" fill="#6c0c84"/><rect x="2.00" y="17.00" width="2" height="1" fill="#a424c4"/><rect x="4.00" y="17.00" width="1" height="1" fill="#d83cf8"/><rect x="5.00" y="17.00" width="1" height="1" fill="#6c0c84"/><rect x="6.00" y="17.00" width="1" height="1" fill="#d83cf8"/><rect x="7.00" y="17.00" width="1" height="1" fill="#a424c4"/><rect x="2.00" y="18.00" width="2" height="1" fill="#6c0c84"/><rect x="4.00" y="18.00" width="1" height="1" fill="#a424c4"/><rect x="5.00" y="18.00" width="1" height="1" fill="#d83cf8"/><rect x="6.00" y="18.00" width="2" height="1" fill="#a424c4"/><rect x="3.00" y="19.00" width="4" height="1" fill="#d83cf8"/></svg><svg x="1198.7" y="605.3" width="43.00" height="86.00" viewBox="0 0 10 20" preserveAspectRatio="none" shape-rendering="crispEdges"><rect x="7.00" y="0.00" width="1" height="1" fill="#8c7c12"/><rect x="3.00" y="1.00" width="1" height="1" fill="#8c7c12"/><rect x="6.00" y="1.00" width="1" height="1" fill="#cab832"/><rect x="3.00" y="2.00" width="1" height="1" fill="#cab832"/><rect x="3.00" y="3.00" width="1" height="1" fill="#fff860"/><rect x="2.00" y="4.00" width="2" height="1" fill="#8c7c12"/><rect x="7.00" y="4.00" width="1" height="1" fill="#fff860"/><rect x="1.00" y="5.00" width="3" height="1" fill="#8c7c12"/><rect x="7.00" y="5.00" width="1" height="1" fill="#fff860"/><rect x="3.00" y="6.00" width="1" height="1" fill="#cab832"/><rect x="4.00" y="6.00" width="1" height="1" fill="#8c7c12"/><rect x="6.00" y="6.00" width="1" height="1" fill="#8c7c12"/><rect x="7.00" y="6.00" width="1" height="1" fill="#fff860"/><rect x="3.00" y="7.00" width="1" height="1" fill="#cab832"/><rect x="4.00" y="7.00" width="1" height="1" fill="#8c7c12"/><rect x="6.00" y="7.00" width="1" height="1" fill="#8c7c12"/><rect x="7.00" y="7.00" width="1" height="1" fill="#fff860"/><rect x="2.00" y="8.00" width="3" height="1" fill="#fff860"/><rect x="6.00" y="8.00" width="2" height="1" fill="#8c7c12"/><rect x="1.00" y="9.00" width="2" height="1" fill="#fff860"/><rect x="4.00" y="9.00" width="2" height="1" fill="#8c7c12"/><rect x="6.00" y="9.00" width="1" height="1" fill="#fff860"/><rect x="7.00" y="9.00" width="1" height="1" fill="#8c7c12"/><rect x="1.00" y="10.00" width="2" height="1" fill="#fff860"/><rect x="3.00" y="10.00" width="1" height="1" fill="#8c7c12"/><rect x="4.00" y="10.00" width="1" height="1" fill="#cab832"/><rect x="5.00" y="10.00" width="1" height="1" fill="#8c7c12"/><rect x="6.00" y="10.00" width="1" height="1" fill="#cab832"/><rect x="7.00" y="10.00" width="1" height="1" fill="#8c7c12"/><rect x="1.00" y="11.00" width="1" height="1" fill="#8c7c12"/><rect x="2.00" y="11.00" width="2" height="1" fill="#fff860"/><rect x="4.00" y="11.00" width="2" height="1" fill="#cab832"/><rect x="6.00" y="11.00" width="1" height="1" fill="#8c7c12"/><rect x="7.00" y="11.00" width="1" height="1" fill="#fff860"/><rect x="0.00" y="12.00" width="1" height="1" fill="#8c7c12"/><rect x="1.00" y="12.00" width="1" height="1" fill="#fff860"/><rect x="3.00" y="12.00" width="1" height="1" fill="#8c7c12"/><rect x="4.00" y="12.00" width="2" height="1" fill="#cab832"/><rect x="6.00" y="12.00" width="1" height="1" fill="#8c7c12"/><rect x="7.00" y="12.00" width="1" height="1" fill="#fff860"/><rect x="3.00" y="13.00" width="1" height="1" fill="#8c7c12"/><rect x="4.00" y="13.00" width="2" height="1" fill="#fff860"/><rect x="6.00" y="13.00" width="1" height="1" fill="#cab832"/><rect x="7.00" y="13.00" width="1" height="1" fill="#8c7c12"/><rect x="9.00" y="13.00" width="1" height="1" fill="#fff860"/><rect x="0.00" y="14.00" width="4" height="1" fill="#fff860"/><rect x="4.00" y="14.00" width="1" height="1" fill="#8c7c12"/><rect x="5.00" y="14.00" width="1" height="1" fill="#fff860"/><rect x="6.00" y="14.00" width="3" height="1" fill="#8c7c12"/><rect x="9.00" y="14.00" width="1" height="1" fill="#fff860"/><rect x="1.00" y="15.00" width="1" height="1" fill="#8c7c12"/><rect x="2.00" y="15.00" width="4" height="1" fill="#fff860"/><rect x="6.00" y="15.00" width="1" height="1" fill="#cab832"/><rect x="7.00" y="15.00" width="3" height="1" fill="#8c7c12"/><rect x="1.00" y="16.00" width="1" height="1" fill="#fff860"/><rect x="2.00" y="16.00" width="2" height="1" fill="#cab832"/><rect x="4.00" y="16.00" width="2" height="1" fill="#fff860"/><rect x="6.00" y="16.00" width="2" height="1" fill="#cab832"/><rect x="8.00" y="16.00" width="1" height="1" fill="#8c7c12"/><rect x="2.00" y="17.00" width="2" height="1" fill="#cab832"/><rect x="4.00" y="17.00" width="1" height="1" fill="#fff860"/><rect x="5.00" y="17.00" width="1" height="1" fill="#8c7c12"/><rect x="6.00" y="17.00" width="1" height="1" fill="#fff860"/><rect x="7.00" y="17.00" width="1" height="1" fill="#cab832"/><rect x="2.00" y="18.00" width="2" height="1" fill="#8c7c12"/><rect x="4.00" y="18.00" width="1" height="1" fill="#cab832"/><rect x="5.00" y="18.00" width="1" height="1" fill="#fff860"/><rect x="6.00" y="18.00" width="2" height="1" fill="#cab832"/><rect x="3.00" y="19.00" width="4" height="1" fill="#fff860"/></svg><clipPath id="ac1"><polygon points="1064.6,434.2 1080.6,434.2 1085.6,437.2 1095.6,440.2 1101.6,443.7 1104.6,447.2 1107.6,452.7 1110.6,456.2 1113.6,462.2 1117.6,467.2 1120.6,471.2 1123.6,475.2 1123.6,484.2 1120.6,489.2 1117.6,493.2 1113.6,496.2 1107.6,501.2 1101.6,504.2 1097.6,508.2 1092.6,512.2 1070.6,512.2 1061.6,508.2 1052.6,505.2 1045.6,501.2 1042.6,497.2 1036.6,492.2 1033.6,489.2 1030.1,484.2 1030.1,462.2 1033.6,459.2 1036.6,453.2 1039.6,450.2 1045.6,447.2 1049.6,444.2 1052.6,441.2 1058.6,437.2"/></clipPath><g clip-path="url(#ac1)"><rect x="1027.60" y="432.20" width="98.00" height="82.00" fill="#7e0c04"/><path d="M1027.6 490.2 C1049.6 470.2 1074.6 472.2 1089.6 474.2 C1104.6 478.2 1114.6 484.2 1125.6 490.2 V432.2 H1027.6 Z" fill="#961406"/><path d="M1027.6 476.2 C1044.6 456.2 1069.6 448.2 1084.6 450.2 C1101.6 452.2 1114.6 466.2 1125.6 478.2 V432.2 H1027.6 Z" fill="#b82010"/><rect x="1057.60" y="446.20" width="2.60" height="2.60" fill="#6c0804"/><rect x="1065.60" y="442.20" width="2.60" height="2.60" fill="#6c0804"/><rect x="1073.60" y="448.20" width="2.60" height="2.60" fill="#6c0804"/><rect x="1081.60" y="444.20" width="2.60" height="2.60" fill="#6c0804"/><rect x="1089.60" y="450.20" width="2.60" height="2.60" fill="#6c0804"/><rect x="1049.60" y="458.20" width="2.60" height="2.60" fill="#6c0804"/><rect x="1097.60" y="456.20" width="2.60" height="2.60" fill="#6c0804"/><rect x="1103.60" y="464.20" width="2.60" height="2.60" fill="#6c0804"/><rect x="1043.60" y="468.20" width="2.60" height="2.60" fill="#6c0804"/><rect x="1111.60" y="474.20" width="2.60" height="2.60" fill="#6c0804"/><ellipse cx="1071.6" cy="465.2" rx="10" ry="9" fill="#6c0804" stroke="#c02810" stroke-width="1.6"/><path d="M1065.6 471.9 H1077.6" stroke="#4a0000" stroke-width="2"/><ellipse cx="1088.6" cy="491.2" rx="8" ry="8" fill="#6c0804" stroke="#c02810" stroke-width="1.6"/><path d="M1083.8 497.2 H1093.4" stroke="#4a0000" stroke-width="2"/><ellipse cx="1055.6" cy="483.2" rx="6" ry="4.5" fill="#6c0804" stroke="#c02810" stroke-width="1.6"/><path d="M1052.0 486.6 H1059.2" stroke="#4a0000" stroke-width="2"/><ellipse cx="1094.6" cy="471.2" rx="5.5" ry="5" fill="#6c0804" stroke="#c02810" stroke-width="1.6"/><path d="M1091.3 474.9 H1097.9" stroke="#4a0000" stroke-width="2"/></g><polygon points="1064.6,434.2 1080.6,434.2 1085.6,437.2 1095.6,440.2 1101.6,443.7 1104.6,447.2 1107.6,452.7 1110.6,456.2 1113.6,462.2 1117.6,467.2 1120.6,471.2 1123.6,475.2 1123.6,484.2 1120.6,489.2 1117.6,493.2 1113.6,496.2 1107.6,501.2 1101.6,504.2 1097.6,508.2 1092.6,512.2 1070.6,512.2 1061.6,508.2 1052.6,505.2 1045.6,501.2 1042.6,497.2 1036.6,492.2 1033.6,489.2 1030.1,484.2 1030.1,462.2 1033.6,459.2 1036.6,453.2 1039.6,450.2 1045.6,447.2 1049.6,444.2 1052.6,441.2 1058.6,437.2" fill="none" stroke="#4a0000" stroke-width="2.6"/><clipPath id="ac2"><polygon points="1205.6,434.2 1221.6,434.2 1226.6,437.2 1236.6,440.2 1242.6,443.7 1245.6,447.2 1248.6,452.7 1251.6,456.2 1254.6,462.2 1258.6,467.2 1261.6,471.2 1264.6,475.2 1264.6,484.2 1261.6,489.2 1258.6,493.2 1254.6,496.2 1248.6,501.2 1242.6,504.2 1238.6,508.2 1233.6,512.2 1211.6,512.2 1202.6,508.2 1193.6,505.2 1186.6,501.2 1183.6,497.2 1177.6,492.2 1174.6,489.2 1171.1,484.2 1171.1,462.2 1174.6,459.2 1177.6,453.2 1180.6,450.2 1186.6,447.2 1190.6,444.2 1193.6,441.2 1199.6,437.2"/></clipPath><g clip-path="url(#ac2)"><rect x="1168.60" y="432.20" width="98.00" height="82.00" fill="#184a92"/><path d="M1168.6 490.2 C1190.6 470.2 1215.6 472.2 1230.6 474.2 C1245.6 478.2 1255.6 484.2 1266.6 490.2 V432.2 H1168.6 Z" fill="#1e5aa8"/><path d="M1168.6 476.2 C1185.6 456.2 1210.6 448.2 1225.6 450.2 C1242.6 452.2 1255.6 466.2 1266.6 478.2 V432.2 H1168.6 Z" fill="#2c6cc0"/><rect x="1198.60" y="446.20" width="2.60" height="2.60" fill="#0e3c80"/><rect x="1206.60" y="442.20" width="2.60" height="2.60" fill="#0e3c80"/><rect x="1214.60" y="448.20" width="2.60" height="2.60" fill="#0e3c80"/><rect x="1222.60" y="444.20" width="2.60" height="2.60" fill="#0e3c80"/><rect x="1230.60" y="450.20" width="2.60" height="2.60" fill="#0e3c80"/><rect x="1190.60" y="458.20" width="2.60" height="2.60" fill="#0e3c80"/><rect x="1238.60" y="456.20" width="2.60" height="2.60" fill="#0e3c80"/><rect x="1244.60" y="464.20" width="2.60" height="2.60" fill="#0e3c80"/><rect x="1184.60" y="468.20" width="2.60" height="2.60" fill="#0e3c80"/><rect x="1252.60" y="474.20" width="2.60" height="2.60" fill="#0e3c80"/><ellipse cx="1212.6" cy="465.2" rx="10" ry="9" fill="#0e3c80" stroke="#3880d0" stroke-width="1.6"/><path d="M1206.6 471.9 H1218.6" stroke="#021a3a" stroke-width="2"/><ellipse cx="1229.6" cy="491.2" rx="8" ry="8" fill="#0e3c80" stroke="#3880d0" stroke-width="1.6"/><path d="M1224.8 497.2 H1234.4" stroke="#021a3a" stroke-width="2"/><ellipse cx="1196.6" cy="483.2" rx="6" ry="4.5" fill="#0e3c80" stroke="#3880d0" stroke-width="1.6"/><path d="M1193.0 486.6 H1200.2" stroke="#021a3a" stroke-width="2"/><ellipse cx="1235.6" cy="471.2" rx="5.5" ry="5" fill="#0e3c80" stroke="#3880d0" stroke-width="1.6"/><path d="M1232.3 474.9 H1238.9" stroke="#021a3a" stroke-width="2"/></g><polygon points="1205.6,434.2 1221.6,434.2 1226.6,437.2 1236.6,440.2 1242.6,443.7 1245.6,447.2 1248.6,452.7 1251.6,456.2 1254.6,462.2 1258.6,467.2 1261.6,471.2 1264.6,475.2 1264.6,484.2 1261.6,489.2 1258.6,493.2 1254.6,496.2 1248.6,501.2 1242.6,504.2 1238.6,508.2 1233.6,512.2 1211.6,512.2 1202.6,508.2 1193.6,505.2 1186.6,501.2 1183.6,497.2 1177.6,492.2 1174.6,489.2 1171.1,484.2 1171.1,462.2 1174.6,459.2 1177.6,453.2 1180.6,450.2 1186.6,447.2 1190.6,444.2 1193.6,441.2 1199.6,437.2" fill="none" stroke="#021a3a" stroke-width="2.6"/><clipPath id="ac3"><polygon points="1330.2,435.9 1346.2,435.9 1351.2,438.9 1361.2,441.9 1367.2,445.4 1370.2,448.9 1373.2,454.4 1376.2,457.9 1379.2,463.9 1383.2,468.9 1386.2,472.9 1389.2,476.9 1389.2,485.9 1386.2,490.9 1383.2,494.9 1379.2,497.9 1373.2,502.9 1367.2,505.9 1363.2,509.9 1358.2,513.9 1336.2,513.9 1327.2,509.9 1318.2,506.9 1311.2,502.9 1308.2,498.9 1302.2,493.9 1299.2,490.9 1295.7,485.9 1295.7,463.9 1299.2,460.9 1302.2,454.9 1305.2,451.9 1311.2,448.9 1315.2,445.9 1318.2,442.9 1324.2,438.9"/></clipPath><g clip-path="url(#ac3)"><rect x="1293.20" y="433.90" width="98.00" height="82.00" fill="#b08018"/><path d="M1293.2 491.9 C1315.2 471.9 1340.2 473.9 1355.2 475.9 C1370.2 479.9 1380.2 485.9 1391.2 491.9 V433.9 H1293.2 Z" fill="#c8941e"/><path d="M1293.2 477.9 C1310.2 457.9 1335.2 449.9 1350.2 451.9 C1367.2 453.9 1380.2 467.9 1391.2 479.9 V433.9 H1293.2 Z" fill="#d8a428"/><rect x="1323.20" y="447.90" width="2.60" height="2.60" fill="#9c7010"/><rect x="1331.20" y="443.90" width="2.60" height="2.60" fill="#9c7010"/><rect x="1339.20" y="449.90" width="2.60" height="2.60" fill="#9c7010"/><rect x="1347.20" y="445.90" width="2.60" height="2.60" fill="#9c7010"/><rect x="1355.20" y="451.90" width="2.60" height="2.60" fill="#9c7010"/><rect x="1315.20" y="459.90" width="2.60" height="2.60" fill="#9c7010"/><rect x="1363.20" y="457.90" width="2.60" height="2.60" fill="#9c7010"/><rect x="1369.20" y="465.90" width="2.60" height="2.60" fill="#9c7010"/><rect x="1309.20" y="469.90" width="2.60" height="2.60" fill="#9c7010"/><rect x="1377.20" y="475.90" width="2.60" height="2.60" fill="#9c7010"/><ellipse cx="1337.2" cy="466.9" rx="10" ry="9" fill="#9c7010" stroke="#e0b034" stroke-width="1.6"/><path d="M1331.2 473.6 H1343.2" stroke="#4a3808" stroke-width="2"/><ellipse cx="1354.2" cy="492.9" rx="8" ry="8" fill="#9c7010" stroke="#e0b034" stroke-width="1.6"/><path d="M1349.4 498.9 H1359.0" stroke="#4a3808" stroke-width="2"/><ellipse cx="1321.2" cy="484.9" rx="6" ry="4.5" fill="#9c7010" stroke="#e0b034" stroke-width="1.6"/><path d="M1317.6 488.3 H1324.8" stroke="#4a3808" stroke-width="2"/><ellipse cx="1360.2" cy="472.9" rx="5.5" ry="5" fill="#9c7010" stroke="#e0b034" stroke-width="1.6"/><path d="M1356.9 476.6 H1363.5" stroke="#4a3808" stroke-width="2"/></g><polygon points="1330.2,435.9 1346.2,435.9 1351.2,438.9 1361.2,441.9 1367.2,445.4 1370.2,448.9 1373.2,454.4 1376.2,457.9 1379.2,463.9 1383.2,468.9 1386.2,472.9 1389.2,476.9 1389.2,485.9 1386.2,490.9 1383.2,494.9 1379.2,497.9 1373.2,502.9 1367.2,505.9 1363.2,509.9 1358.2,513.9 1336.2,513.9 1327.2,509.9 1318.2,506.9 1311.2,502.9 1308.2,498.9 1302.2,493.9 1299.2,490.9 1295.7,485.9 1295.7,463.9 1299.2,460.9 1302.2,454.9 1305.2,451.9 1311.2,448.9 1315.2,445.9 1318.2,442.9 1324.2,438.9" fill="none" stroke="#4a3808" stroke-width="2.6"/><clipPath id="ac4"><polygon points="1467.9,437.2 1483.9,437.2 1488.9,440.2 1498.9,443.2 1504.9,446.7 1507.9,450.2 1510.9,455.7 1513.9,459.2 1516.9,465.2 1520.9,470.2 1523.9,474.2 1526.9,478.2 1526.9,487.2 1523.9,492.2 1520.9,496.2 1516.9,499.2 1510.9,504.2 1504.9,507.2 1500.9,511.2 1495.9,515.2 1473.9,515.2 1464.9,511.2 1455.9,508.2 1448.9,504.2 1445.9,500.2 1439.9,495.2 1436.9,492.2 1433.4,487.2 1433.4,465.2 1436.9,462.2 1439.9,456.2 1442.9,453.2 1448.9,450.2 1452.9,447.2 1455.9,444.2 1461.9,440.2"/></clipPath><g clip-path="url(#ac4)"><rect x="1430.90" y="435.20" width="98.00" height="82.00" fill="#3a2a26"/><path d="M1430.9 493.2 C1452.9 473.2 1477.9 475.2 1492.9 477.2 C1507.9 481.2 1517.9 487.2 1528.9 493.2 V435.2 H1430.9 Z" fill="#4a3832"/><path d="M1430.9 483.2 L1444.9 477.2 L1454.9 471.2 L1464.9 463.2 L1480.9 461.2 L1494.9 467.2 L1508.9 473.2 L1518.9 481.2 L1528.9 489.2 V435.2 H1430.9 Z" fill="#b89070"/><rect x="1460.90" y="449.20" width="2.60" height="2.60" fill="#d4bca8"/><rect x="1464.90" y="452.20" width="2.40" height="2.40" fill="#4a3830"/><rect x="1468.90" y="445.20" width="2.60" height="2.60" fill="#d4bca8"/><rect x="1472.90" y="448.20" width="2.40" height="2.40" fill="#4a3830"/><rect x="1476.90" y="451.20" width="2.60" height="2.60" fill="#d4bca8"/><rect x="1480.90" y="454.20" width="2.40" height="2.40" fill="#4a3830"/><rect x="1484.90" y="447.20" width="2.60" height="2.60" fill="#d4bca8"/><rect x="1488.90" y="450.20" width="2.40" height="2.40" fill="#4a3830"/><rect x="1492.90" y="453.20" width="2.60" height="2.60" fill="#d4bca8"/><rect x="1496.90" y="456.20" width="2.40" height="2.40" fill="#4a3830"/><rect x="1452.90" y="461.20" width="2.60" height="2.60" fill="#d4bca8"/><rect x="1456.90" y="464.20" width="2.40" height="2.40" fill="#4a3830"/><rect x="1462.90" y="467.20" width="2.60" height="2.60" fill="#d4bca8"/><rect x="1466.90" y="470.20" width="2.40" height="2.40" fill="#4a3830"/><rect x="1500.90" y="459.20" width="2.60" height="2.60" fill="#d4bca8"/><rect x="1504.90" y="462.20" width="2.40" height="2.40" fill="#4a3830"/><rect x="1506.90" y="467.20" width="2.60" height="2.60" fill="#d4bca8"/><rect x="1510.90" y="470.20" width="2.40" height="2.40" fill="#4a3830"/><rect x="1488.90" y="461.20" width="2.60" height="2.60" fill="#d4bca8"/><rect x="1492.90" y="464.20" width="2.40" height="2.40" fill="#4a3830"/><rect x="1446.90" y="471.20" width="2.60" height="2.60" fill="#d4bca8"/><rect x="1450.90" y="474.20" width="2.40" height="2.40" fill="#4a3830"/><rect x="1514.90" y="477.20" width="2.60" height="2.60" fill="#d4bca8"/><rect x="1518.90" y="480.20" width="2.40" height="2.40" fill="#4a3830"/><rect x="1472.90" y="457.20" width="2.60" height="2.60" fill="#d4bca8"/><rect x="1476.90" y="460.20" width="2.40" height="2.40" fill="#4a3830"/><ellipse cx="1474.9" cy="468.2" rx="10" ry="9" fill="#120c0a" stroke="#b08868" stroke-width="1.6"/><path d="M1468.9 474.9 H1480.9" stroke="#000000" stroke-width="2"/><ellipse cx="1491.9" cy="494.2" rx="8" ry="8" fill="#120c0a" stroke="#b08868" stroke-width="1.6"/><path d="M1487.1 500.2 H1496.7" stroke="#000000" stroke-width="2"/><ellipse cx="1458.9" cy="486.2" rx="6" ry="4.5" fill="#120c0a" stroke="#b08868" stroke-width="1.6"/><path d="M1455.3 489.6 H1462.5" stroke="#000000" stroke-width="2"/><ellipse cx="1497.9" cy="474.2" rx="5.5" ry="5" fill="#120c0a" stroke="#b08868" stroke-width="1.6"/><path d="M1494.6 477.9 H1501.2" stroke="#000000" stroke-width="2"/></g><polygon points="1467.9,437.2 1483.9,437.2 1488.9,440.2 1498.9,443.2 1504.9,446.7 1507.9,450.2 1510.9,455.7 1513.9,459.2 1516.9,465.2 1520.9,470.2 1523.9,474.2 1526.9,478.2 1526.9,487.2 1523.9,492.2 1520.9,496.2 1516.9,499.2 1510.9,504.2 1504.9,507.2 1500.9,511.2 1495.9,515.2 1473.9,515.2 1464.9,511.2 1455.9,508.2 1448.9,504.2 1445.9,500.2 1439.9,495.2 1436.9,492.2 1433.4,487.2 1433.4,465.2 1436.9,462.2 1439.9,456.2 1442.9,453.2 1448.9,450.2 1452.9,447.2 1455.9,444.2 1461.9,440.2" fill="none" stroke="#000000" stroke-width="2.6"/><g transform="translate(0,0)" stroke="#000" stroke-width="2.2" stroke-linejoin="round"><polygon points="748.2,442.1 766.9,442.1 771.1,449 744.3,449" fill="#a81c00"/><polygon points="744.3,449 771.1,449 788.2,463 727.5,463 " fill="#9c1800"/><polygon points="727.5,461 788.2,461 788.2,466 767,486 758,492 750,492 727.5,468" fill="#d83010"/><path d="M733 458.9 H783" stroke-width="2.4"/><polygon points="735,466 747,475 742,481 730,472" fill="#d83010" stroke-width="1.8"/><polygon points="752,475 763,475 767.5,483.5 763,492.3 752,492.3 747.5,483.5" fill="#d6e2f8"/><rect x="728.5" y="477" width="7.5" height="19" fill="#d83010"/><path d="M729.8 496 H734.8 V509 L732.3 512 L729.8 509 Z" fill="#6e6e6e"/></g><g transform="translate(85,0)" stroke="#000" stroke-width="2.2" stroke-linejoin="round"><polygon points="748.2,442.1 766.9,442.1 771.1,449 744.3,449" fill="#b42ca8"/><polygon points="744.3,449 771.1,449 788.2,463 727.5,463 " fill="#a424a4"/><polygon points="727.5,461 788.2,461 788.2,466 767,486 758,492 750,492 727.5,468" fill="#d040c8"/><path d="M733 458.9 H783" stroke-width="2.4"/><polygon points="735,466 747,475 742,481 730,472" fill="#d040c8" stroke-width="1.8"/><polygon points="752,475 763,475 767.5,483.5 763,492.3 752,492.3 747.5,483.5" fill="#d6e2f8"/><rect x="728.5" y="477" width="7.5" height="19" fill="#c838c0"/><path d="M729.8 496 H734.8 V509 L732.3 512 L729.8 509 Z" fill="#6e6e6e"/></g><g stroke="#000" stroke-width="2.6" stroke-linejoin="round"><rect x="905" y="444" width="4.8" height="23" fill="#000"/><rect x="988.2" y="444" width="4.8" height="23" fill="#000"/><polygon points="933.7,418.6 962.3,418.6 967.5,427.5 928.5,427.5" fill="#a81c00"/><polygon points="928.5,427.5 967.5,427.5 993.1,445 904.6,445" fill="#9c1800"/><polygon points="904.6,443 993.1,443 993.1,456.6 964,484 958,491.6 938,491.6 904.6,456.6" fill="#d83010"/><path d="M912 442.6 H986" stroke-width="3"/><polygon points="916,448 935,461 929,470 910,457" fill="#d83010" stroke-width="2.2"/><polygon points="941,466.5 956,466.5 962.3,478.8 956,491.2 941,491.2 934.3,478.8" fill="#d6e2f8"/><rect x="900.3" y="467" width="13.2" height="27" fill="#d83010"/><rect x="901.8" y="469" width="2.2" height="23" fill="#777" stroke="none"/><path d="M902.3 495 H911.3 V513 L906.8 517 L902.3 513 Z" fill="#6e6e6e"/><rect x="983.7" y="467" width="13.2" height="27" fill="#d83010"/><rect x="985.2" y="469" width="2.2" height="23" fill="#777" stroke="none"/><path d="M985.7 495 H994.7 V513 L990.2 517 L985.7 513 Z" fill="#6e6e6e"/></g><path d="M817 524.5 L822.5 537 L817 546.8 L811.6 537 Z" fill="#d040d0" stroke="#000" stroke-width="1.8"/><circle cx="811" cy="547.5" r="1.4" fill="#000"/><circle cx="824" cy="546" r="1.2" fill="#000"/><path d="M990.5 525.4 L996.5 541 L997.5 548 L990.5 559.2 L983.4 548 L984.4 541 Z" fill="#f0b030" stroke="#000" stroke-width="2"/><path d="M990.5 532 L994 545 L990.5 553 L987 545 Z" fill="#e03818"/><rect x="979.5" y="557" width="4" height="4" fill="#000" transform="rotate(45 981.5 559)"/><rect x="998" y="553.5" width="4" height="4" fill="#000" transform="rotate(45 1000 555.5)"/><polygon points="906.0,574.7 911.9,585.4 920.8,584.9 920.3,593.8 931.0,599.7 920.3,605.6 920.8,614.5 911.9,614.0 906.0,624.7 900.1,614.0 891.2,614.5 891.7,605.6 881.0,599.7 891.7,593.8 891.2,584.9 900.1,585.4" fill="#d86452" stroke="#d84a34" stroke-width="1.6" stroke-linejoin="miter"/><polygon points="906,583.7 922,599.7 906,615.7 890,599.7" fill="#e07e44"/><polygon points="906,588.2 917.5,599.7 906,611.2 894.5,599.7" fill="#e4b044"/><polygon points="906,592.7 913,599.7 906,606.7 899,599.7" fill="#fff490"/><rect x="904.0" y="568.7" width="4" height="4" fill="#d84830"/><rect x="904.0" y="628.2" width="4" height="4" fill="#d84830"/><rect x="873.8" y="597.7" width="4" height="4" fill="#d84830"/><rect x="934.5" y="597.7" width="4" height="4" fill="#d84830"/><rect x="887.1" y="580.8" width="3.2" height="3.2" fill="#d84830"/><rect x="921.7" y="580.8" width="3.2" height="3.2" fill="#d84830"/><rect x="887.1" y="615.4" width="3.2" height="3.2" fill="#d84830"/><rect x="921.7" y="615.4" width="3.2" height="3.2" fill="#d84830"/><g stroke="#000" stroke-width="2.4" stroke-linejoin="round"><polygon points="810.3,690.9 782.6,712 776.6,723 780,727 800,729.4 819.1,729.4 821,707" fill="#fff850"/><polygon points="851.2,690.9 879.6,712 886.4,723 883,727 862,729.4 843,729.4 841,707" fill="#fff850"/><polygon points="779,724 800,727 819,729 819,724" fill="#d8dde2" stroke="none"/><polygon points="884,724 862,727 843,729 843,724" fill="#d8dde2" stroke="none"/><polygon points="827.1,645.2 835.1,645.2 840.7,651.6 843.9,662.9 846.3,671.7 848.7,682 851.2,690.9 853,706 809,706 810.3,690.9 812.7,682 815.5,671.7 818.3,662.9 821.5,651.6" fill="#d8dde2"/><path d="M831 665 L839 672 V686 L841.5 690 V705 H821.5 V690 L824 686 V672 Z" fill="#fff850" stroke="#d8c830" stroke-width="1.6"/><rect x="821.5" y="707.5" width="21" height="23.5" fill="#000"/><path d="M824 713 H840 M824 719 H840 M824 725 H840" stroke="#8a8a8a" stroke-width="2"/><polygon points="770,681 777,679.7 781,681 781,695 783,697 783,717 768.2,717 768.2,697 770,695" fill="#8c8c8c"/><polygon points="881.5,681 887,679 892,681 892,695 894,697 894,717 880,717 880,697 881.5,695" fill="#8c8c8c"/><path d="M775.8 638.5 L782 650 L783 657 L780.5 663 L778 670 L773.5 670 L771 663 L768.3 657 L769.5 650 Z" fill="#f8d030"/></g><path d="M775.8 646 L779 655 L775.8 660 L772.6 655 Z" fill="#e84020"/><rect x="774" y="658" width="3.5" height="11" fill="#e8a020"/><rect x="774.6" y="670" width="1.8" height="7" fill="#000"/><rect x="763.4" y="640.8" width="4" height="4" fill="#000" transform="rotate(45 765.4 642.8)"/><rect x="784.3" y="637.2" width="4" height="4" fill="#000" transform="rotate(45 786.3 639.2)"/></svg>
<div class="a" style="left:1771px;top:528px;width:360px;height:674px;box-shadow:0 2px 6px rgba(0,0,0,.35)"></div>
<div class="a" style="left:1773px;top:529.5px;width:356px;height:670px;background:#383838;"></div>
<div class="a" style="left:1774.5px;top:534px;width:353px;height:36px;background:#424242;"></div>
<div class="a" style="left:1774.5px;top:570px;width:353px;height:618.5px;background:#535353;"></div>
<div class="a" style="left:1870.3px;top:536px;width:1.2px;height:33px;background:#3a3a3a;"></div>
<div class="a" style="left:1967px;top:534px;width:74px;height:36px;background:#535353;"></div>
<div class="t" style="left:1786.5px;top:543.7px;font-size:14.8px;-webkit-text-stroke:0.3px currentColor;color:#cfcfcf;width:84px;overflow:hidden;">Exportation de ressources</div>
<div class="t" style="left:1881.5px;top:543.7px;font-size:14.8px;-webkit-text-stroke:0.3px currentColor;color:#cfcfcf;width:85px;overflow:hidden;">Plans de travail</div>
<div class="t" style="left:1977.3px;top:543.7px;font-size:14.8px;font-weight:bold;color:#f4f4f4;transform:scaleX(0.9207);">Calques</div>
<svg class="a" style="left:2072px;top:546px;" width="18" height="16" viewBox="0 0 18 16"><path d="M2.5 3 L7 8 L2.5 13 M9 3 L13.5 8 L9 13" fill="none" stroke="#c8c8c8" stroke-width="1.4"/></svg>
<div class="a" style="left:2095.7px;top:545.5px;width:1.5px;height:16px;background:#c8c8c8;"></div>
<svg class="a" style="left:2105px;top:546px;" width="17" height="16" viewBox="0 0 17 16"><path d="M1.5 3.5 H15.5 M1.5 8 H15.5 M1.5 12.5 H15.5" stroke="#c8c8c8" stroke-width="1.5"/></svg>
<div class="a" style="left:1781.5px;top:577.5px;width:339px;height:585px;border:1px solid #5a5a5a;border-radius:2px"></div>
<div class="a" style="left:1782.6px;top:580.7px;width:337.2px;height:25.7px;background:#506680;"></div>
<div class="a" style="left:1808.3px;top:580.7px;width:1.5px;height:25.7px;background:#5e7088;"></div>
<div class="a" style="left:1835.5px;top:580.7px;width:1.5px;height:25.7px;background:#5e7088;"></div>
<div class="a" style="left:1843.5px;top:580.7px;width:1px;height:25.7px;background:#5e7088;"></div>
<div class="a" style="left:2072.3px;top:580.7px;width:1.6px;height:25.7px;background:#5e7088;"></div>
<div class="a" style="left:1782.6px;top:606.4000000000001px;width:337.2px;height:1.7px;background:#5a5a5a;"></div>
<svg class="a" style="left:1786px;top:584.7px;" width="18" height="18" viewBox="0 0 18 18"><path d="M1 9 C4.5 2.8 13.5 2.8 17 9 C13.5 15.2 4.5 15.2 1 9 Z" fill="#d6d6d6"/><circle cx="9" cy="9" r="3.3" fill="none" stroke="#506680" stroke-width="1.3"/><circle cx="9.4" cy="9.3" r="1.4" fill="#b8b8b8"/></svg>
<div class="a" style="left:1838.7px;top:582.2px;width:3.9px;height:22.7px;background:#a83200;"></div>
<svg class="a" style="left:1850px;top:585.7px;" width="12" height="16" viewBox="0 0 12 16"><path d="M4 3 L8.5 8 L4 13" fill="none" stroke="#d6d6d6" stroke-width="1.5"/></svg>
<div class="a" style="left:1876px;top:582.0px;width:24.2px;height:23.4px;background:#fff;border:1.6px solid #111;border-radius:2.5px"></div>
<div class="t" style="left:1906.4px;top:587.2px;font-size:15.3px;-webkit-text-stroke:0.3px currentColor;color:#ededed;transform:scaleX(0.9491);">test</div>
<div class="a" style="left:2081.3px;top:588.1px;width:11px;height:11px;border-radius:50%;border:1.5px solid #d6d6d6"></div>
<div class="a" style="left:1782.6px;top:608.1px;width:337.2px;height:25.7px;background:#535353;"></div>
<div class="a" style="left:1808.3px;top:608.1px;width:1.5px;height:25.7px;background:#5c5c5c;"></div>
<div class="a" style="left:1835.5px;top:608.1px;width:1.5px;height:25.7px;background:#5c5c5c;"></div>
<div class="a" style="left:1843.5px;top:608.1px;width:1px;height:25.7px;background:#5a5a5a;"></div>
<div class="a" style="left:2072.3px;top:608.1px;width:1.6px;height:25.7px;background:#5c5c5c;"></div>
<div class="a" style="left:1782.6px;top:633.8000000000001px;width:337.2px;height:1.7px;background:#5a5a5a;"></div>
<svg class="a" style="left:1786px;top:612.1px;" width="18" height="18" viewBox="0 0 18 18"><path d="M1 9 C4.5 2.8 13.5 2.8 17 9 C13.5 15.2 4.5 15.2 1 9 Z" fill="#d6d6d6"/><circle cx="9" cy="9" r="3.3" fill="none" stroke="#535353" stroke-width="1.3"/><circle cx="9.4" cy="9.3" r="1.4" fill="#b8b8b8"/></svg>
<div class="a" style="left:1838.7px;top:609.6px;width:3.9px;height:22.7px;background:#000000;"></div>
<svg class="a" style="left:1850px;top:613.1px;" width="12" height="16" viewBox="0 0 12 16"><path d="M4 3 L8.5 8 L4 13" fill="none" stroke="#d6d6d6" stroke-width="1.5"/></svg>
<div class="a" style="left:1876px;top:609.4px;width:24.2px;height:23.4px;background:#fff;border:1.6px solid #111;border-radius:2.5px"></div>
<div class="t" style="left:1906.4px;top:614.6px;font-size:15.3px;-webkit-text-stroke:0.3px currentColor;color:#dedede;transform:scaleX(0.9162);">Calque 8</div>
<div class="a" style="left:2081.3px;top:615.5px;width:11px;height:11px;border-radius:50%;border:1.5px solid #d6d6d6"></div>
<div class="a" style="left:1782.6px;top:635.5px;width:337.2px;height:25.7px;background:#535353;"></div>
<div class="a" style="left:1808.3px;top:635.5px;width:1.5px;height:25.7px;background:#5c5c5c;"></div>
<div class="a" style="left:1835.5px;top:635.5px;width:1.5px;height:25.7px;background:#5c5c5c;"></div>
<div class="a" style="left:1843.5px;top:635.5px;width:1px;height:25.7px;background:#5a5a5a;"></div>
<div class="a" style="left:2072.3px;top:635.5px;width:1.6px;height:25.7px;background:#5c5c5c;"></div>
<div class="a" style="left:1782.6px;top:661.2px;width:337.2px;height:1.7px;background:#5a5a5a;"></div>
<svg class="a" style="left:1786px;top:639.5px;" width="18" height="18" viewBox="0 0 18 18"><path d="M1 9 C4.5 2.8 13.5 2.8 17 9 C13.5 15.2 4.5 15.2 1 9 Z" fill="#d6d6d6"/><circle cx="9" cy="9" r="3.3" fill="none" stroke="#535353" stroke-width="1.3"/><circle cx="9.4" cy="9.3" r="1.4" fill="#b8b8b8"/></svg>
<div class="a" style="left:1838.7px;top:637.0px;width:3.9px;height:22.7px;background:#4ee04e;"></div>
<svg class="a" style="left:1850px;top:640.5px;" width="12" height="16" viewBox="0 0 12 16"><path d="M4 3 L8.5 8 L4 13" fill="none" stroke="#d6d6d6" stroke-width="1.5"/></svg>
<div class="a" style="left:1876px;top:636.8px;width:24.2px;height:23.4px;background:#fff;border:1.6px solid #111;border-radius:2.5px"></div>
<div class="t" style="left:1906.4px;top:642.0px;font-size:15.3px;-webkit-text-stroke:0.3px currentColor;color:#dedede;transform:scaleX(0.9177);">ast_lvl1</div>
<div class="a" style="left:2081.3px;top:642.9px;width:11px;height:11px;border-radius:50%;border:1.5px solid #d6d6d6"></div>
<div class="a" style="left:1782.6px;top:662.9px;width:337.2px;height:25.7px;background:#535353;"></div>
<div class="a" style="left:1808.3px;top:662.9px;width:1.5px;height:25.7px;background:#5c5c5c;"></div>
<div class="a" style="left:1835.5px;top:662.9px;width:1.5px;height:25.7px;background:#5c5c5c;"></div>
<div class="a" style="left:1843.5px;top:662.9px;width:1px;height:25.7px;background:#5a5a5a;"></div>
<div class="a" style="left:2072.3px;top:662.9px;width:1.6px;height:25.7px;background:#5c5c5c;"></div>
<div class="a" style="left:1782.6px;top:688.6px;width:337.2px;height:1.7px;background:#5a5a5a;"></div>
<svg class="a" style="left:1814px;top:665.9px;" width="17" height="20" viewBox="0 0 17 20"><rect x="3" y="9" width="11" height="9" rx="1" fill="#cdcdcd"/><path d="M5 9 V6.5 A3.5 3.5 0 0 1 12 6.5 V9" fill="none" stroke="#cdcdcd" stroke-width="1.8"/><rect x="7.7" y="12" width="1.6" height="3" fill="#535353"/></svg>
<div class="a" style="left:1838.7px;top:664.4px;width:3.9px;height:22.7px;background:#ff4e4e;"></div>
<svg class="a" style="left:1850px;top:667.9px;" width="12" height="16" viewBox="0 0 12 16"><path d="M4 3 L8.5 8 L4 13" fill="none" stroke="#d6d6d6" stroke-width="1.5"/></svg>
<div class="a" style="left:1876px;top:664.2px;width:24.2px;height:23.4px;background:#fff;border:1.6px solid #111;border-radius:2.5px"></div>
<div class="t" style="left:1906.4px;top:669.4px;font-size:15.3px;-webkit-text-stroke:0.3px currentColor;color:#dedede;transform:scaleX(0.9165);">astero_lvl1</div>
<div class="a" style="left:2081.3px;top:670.3px;width:11px;height:11px;border-radius:50%;border:1.5px solid #d6d6d6"></div>
<div class="a" style="left:1782.6px;top:690.3px;width:337.2px;height:25.7px;background:#535353;"></div>
<div class="a" style="left:1808.3px;top:690.3px;width:1.5px;height:25.7px;background:#5c5c5c;"></div>
<div class="a" style="left:1835.5px;top:690.3px;width:1.5px;height:25.7px;background:#5c5c5c;"></div>
<div class="a" style="left:1843.5px;top:690.3px;width:1px;height:25.7px;background:#5a5a5a;"></div>
<div class="a" style="left:2072.3px;top:690.3px;width:1.6px;height:25.7px;background:#5c5c5c;"></div>
<div class="a" style="left:1782.6px;top:716.0px;width:337.2px;height:1.7px;background:#5a5a5a;"></div>
<svg class="a" style="left:1786px;top:694.3px;" width="18" height="18" viewBox="0 0 18 18"><path d="M1 9 C4.5 2.8 13.5 2.8 17 9 C13.5 15.2 4.5 15.2 1 9 Z" fill="#d6d6d6"/><circle cx="9" cy="9" r="3.3" fill="none" stroke="#535353" stroke-width="1.3"/><circle cx="9.4" cy="9.3" r="1.4" fill="#b8b8b8"/></svg>
<div class="a" style="left:1838.7px;top:691.8px;width:3.9px;height:22.7px;background:#4f7dff;"></div>
<svg class="a" style="left:1850px;top:695.3px;" width="12" height="16" viewBox="0 0 12 16"><path d="M4 3 L8.5 8 L4 13" fill="none" stroke="#d6d6d6" stroke-width="1.5"/></svg>
<div class="a" style="left:1876px;top:691.6px;width:24.2px;height:23.4px;background:#fff;border:1.6px solid #111;border-radius:2.5px"></div>
<div class="t" style="left:1906.4px;top:696.8px;font-size:15.3px;-webkit-text-stroke:0.3px currentColor;color:#dedede;transform:scaleX(0.9165);">astero_lvl2</div>
<div class="a" style="left:2081.3px;top:697.7px;width:11px;height:11px;border-radius:50%;border:1.5px solid #d6d6d6"></div>
<svg class="a" style="left:2110px;top:580.7px;" width="10" height="10" viewBox="0 0 10 10"><path d="M0.5 0.5 H9.5 V9.5 Z" fill="#e6e6e6"/></svg>
<svg class="a" style="left:1877.5px;top:582.5px;" width="21" height="20" viewBox="0 0 21 20"><rect x="15" y="9" width="4" height="3" fill="#a01010"/><circle cx="16" cy="11" r="2.2" fill="#8a0a0a"/><rect x="10" y="3" width="3" height="2" fill="#c04020"/><rect x="4" y="10" width="2" height="2" fill="#e8a030"/><rect x="7" y="11" width="2" height="2" fill="#f0f020"/><rect x="11" y="11" width="2" height="2" fill="#c030c0"/><rect x="8" y="14" width="4" height="2" fill="#333366"/><rect x="2" y="13" width="2" height="2" fill="#d0c030"/></svg>
<svg class="a" style="left:1877.5px;top:609.8px;" width="21" height="20" viewBox="0 0 21 20"><path d="M4 9 L8 4 H14 L18 8 L18 13 L13 17 H8 L3 13 Z" fill="#b41010"/><path d="M6 8 H16 M5 12 H17" stroke="#6a0000" stroke-width="1.2"/></svg>
<svg class="a" style="left:1877.5px;top:637.2px;" width="21" height="20" viewBox="0 0 21 20"><path d="M4 9 L8 4 H14 L18 8 L18 13 L13 17 H8 L3 13 Z" fill="#1e62b8"/><path d="M6 8 H16 M5 12 H17" stroke="#0e3a78" stroke-width="1.2"/></svg>
<svg class="a" style="left:1877.5px;top:692px;" width="21" height="20" viewBox="0 0 21 20"><rect x="2" y="9" width="6" height="1.5" fill="#802040"/><rect x="18" y="9.5" width="1.2" height="1.2" fill="#333"/></svg>
<div class="t" style="left:1781.5px;top:1169.8px;font-size:14.8px;-webkit-text-stroke:0.3px currentColor;color:#dcdcdc;transform:scaleX(0.9245);">5 Calques</div>
<svg class="a" style="left:1904px;top:1165px;" width="20" height="20" viewBox="0 0 20 20"><path d="M9 3 H2.5 V18 H17.5 V11" fill="none" stroke="#cdcdcd" stroke-width="1.6"/><path d="M9.5 10.5 L17.5 2.5 M12 2 H18 V8" fill="none" stroke="#cdcdcd" stroke-width="1.6"/></svg>
<svg class="a" style="left:1938px;top:1165px;" width="20" height="20" viewBox="0 0 20 20"><circle cx="8" cy="8" r="5.5" fill="none" stroke="#787878" stroke-width="1.5"/><path d="M12 12 L17.5 17.5" stroke="#787878" stroke-width="2.2"/></svg>
<svg class="a" style="left:1972px;top:1165px;" width="20" height="20" viewBox="0 0 20 20"><rect x="2" y="2" width="11" height="11" fill="none" stroke="#cdcdcd" stroke-width="1.5"/><rect x="5" y="5" width="7" height="7" fill="#cdcdcd"/><rect x="6.5" y="6.5" width="11" height="11" fill="none" stroke="#cdcdcd" stroke-width="1.3" opacity=".7"/></svg>
<svg class="a" style="left:2004px;top:1165px;" width="24" height="20" viewBox="0 0 24 20"><path d="M2.5 2 V7.5 H8 M5.5 5 L8 7.5 L5.5 10" fill="none" stroke="#cdcdcd" stroke-width="1.3"/><rect x="9" y="4" width="13" height="13" fill="none" stroke="#cdcdcd" stroke-width="1.6"/><path d="M15.5 7 V14 M12 10.5 H19" stroke="#cdcdcd" stroke-width="1.8"/></svg>
<svg class="a" style="left:2042px;top:1165px;" width="18" height="20" viewBox="0 0 18 20"><rect x="1.5" y="3" width="14" height="14" fill="none" stroke="#cdcdcd" stroke-width="1.6"/><path d="M8.5 6 V14 M4.5 10 H12.5" stroke="#cdcdcd" stroke-width="1.8"/></svg>
<svg class="a" style="left:2075px;top:1164px;" width="18" height="22" viewBox="0 0 18 22"><path d="M2 5 H16 M6.5 5 V2.5 H11.5 V5" fill="none" stroke="#cdcdcd" stroke-width="1.5"/><rect x="3.5" y="6" width="11" height="13" rx="1" fill="none" stroke="#cdcdcd" stroke-width="1.6"/><path d="M7 8.5 V17 M9 8.5 V17 M11 8.5 V17" stroke="#cdcdcd" stroke-width="1.1"/></svg>
<div class="a" style="left:1774.5px;top:1188.5px;width:353px;height:3px;background:#3a3a3a;"></div>
<div class="a" style="left:1774.5px;top:1191.5px;width:353px;height:7px;background:#4a4a4a;"></div>
<svg class="a" style="left:1938px;top:1192px;" width="26" height="6" viewBox="0 0 26 6"><rect x="0.0" y="0.5" width="1.3" height="5" fill="#3b3b3b"/><rect x="2.4" y="0.5" width="1.3" height="5" fill="#3b3b3b"/><rect x="4.8" y="0.5" width="1.3" height="5" fill="#3b3b3b"/><rect x="7.2" y="0.5" width="1.3" height="5" fill="#3b3b3b"/><rect x="9.6" y="0.5" width="1.3" height="5" fill="#3b3b3b"/><rect x="12.0" y="0.5" width="1.3" height="5" fill="#3b3b3b"/><rect x="14.4" y="0.5" width="1.3" height="5" fill="#3b3b3b"/><rect x="16.8" y="0.5" width="1.3" height="5" fill="#3b3b3b"/><rect x="19.2" y="0.5" width="1.3" height="5" fill="#3b3b3b"/><rect x="21.6" y="0.5" width="1.3" height="5" fill="#3b3b3b"/><rect x="24.0" y="0.5" width="1.3" height="5" fill="#3b3b3b"/></svg>
</body></html>
